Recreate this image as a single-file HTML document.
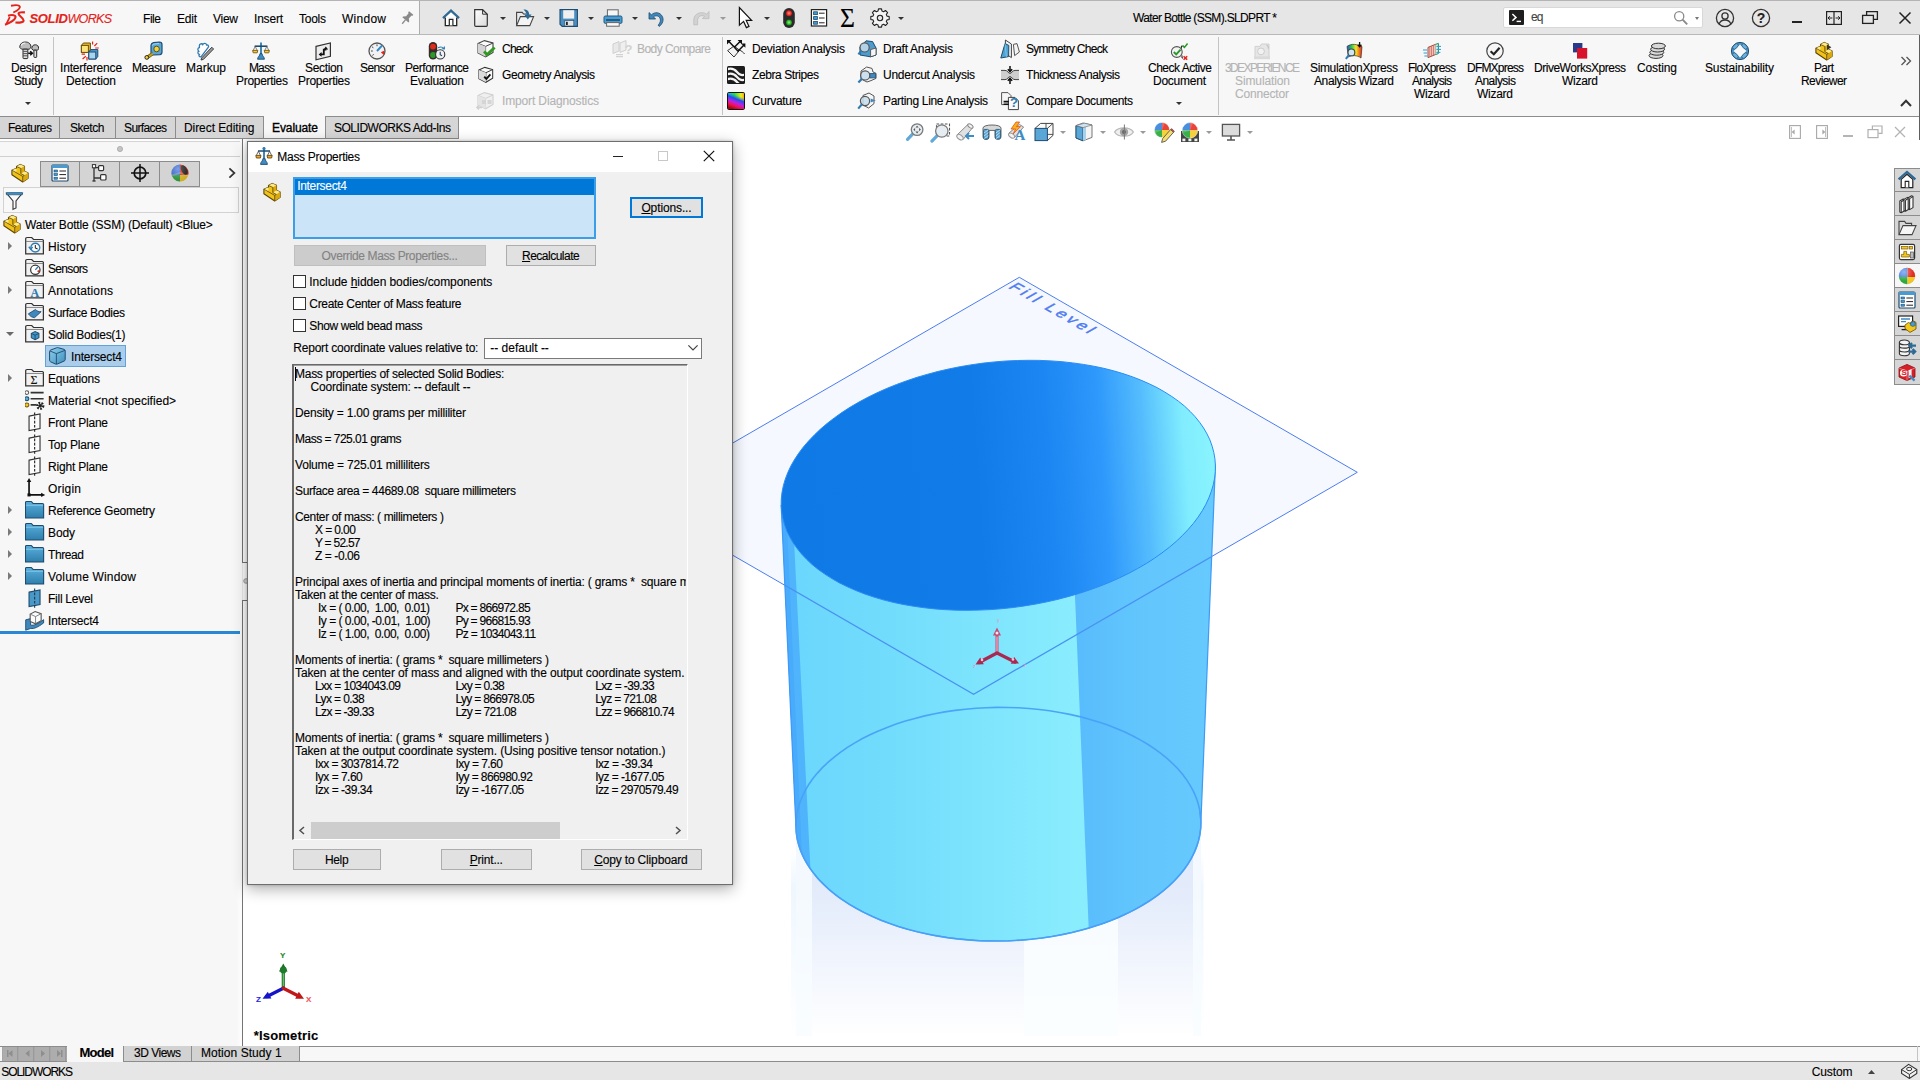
<!DOCTYPE html>
<html lang="en"><head><meta charset="utf-8"><title>SOLIDWORKS - Water Bottle (SSM).SLDPRT</title>
<style>
html,body{margin:0;padding:0;width:1920px;height:1080px;overflow:hidden;background:#fff;}
body{position:relative;font-family:"Liberation Sans",sans-serif;font-size:12px;color:#000;}
.a{position:absolute;box-sizing:border-box;}
.t{position:absolute;white-space:pre;line-height:20px;height:20px;-webkit-text-stroke-width:.12px;}
u{text-decoration:underline;}
</style></head><body>

<!-- 01_frames.py -->
<div class="a" style="left:0px;top:0px;width:1920px;height:35px;background:#e6e6e6;"></div>
<div class="a" style="left:0px;top:0px;width:419px;height:35px;background:#f7f7f7;"></div>
<div class="a" style="left:419px;top:1px;width:1px;height:33px;background:#adadad;"></div>
<div class="a" style="left:0px;top:0px;width:1920px;height:1px;background:#b4b4b4;"></div>
<div class="a" style="left:0px;top:34px;width:1920px;height:1px;background:#b8b8b8;"></div>
<div class="a" style="left:0px;top:35px;width:1920px;height:81px;background:#f7f7f7;"></div>
<div class="a" style="left:0px;top:116px;width:1920px;height:1px;background:#b4b4b4;"></div>
<div class="a" style="left:0px;top:139px;width:242px;height:907px;background:#f7f7f7;background:linear-gradient(90deg,#f7f7f7 0,#f7f7f7 236px,#fdfdfd 242px);"></div>
<div class="a" style="left:242px;top:139px;width:1px;height:907px;background:#747474;"></div>
<div class="a" style="left:242px;top:562px;width:1px;height:38px;background:#ececec;"></div>
<div class="a" style="left:242px;top:562px;width:5px;height:1px;background:#747474;"></div>
<div class="a" style="left:242px;top:600px;width:5px;height:1px;background:#747474;"></div>
<svg class="a" style="left:242px;top:577px;" width="6" height="8" viewBox="0 0 6 8"><circle cx="4" cy="4" r="2.300" fill="#d4d4d4" stroke="#8a8a8a" stroke-width=".8"/></svg>
<div class="a" style="left:0px;top:1062px;width:1920px;height:18px;background:#e6e6e6;border-top:1px solid #9a9a9a;"></div>
<!-- 02_titlebar.py -->
<svg class="a" style="left:0px;top:0px;" width="30" height="30" viewBox="0 0 30 30"><g fill="none" stroke="#e3241b" stroke-linecap="butt" stroke-linejoin="round">
<path d="M11 5.700C15 5 19.200 5 19.800 6.600C20.400 8.200 17 10.700 13.300 12.500" stroke-width="1.900"/>
<path d="M8 15.700C12 14.500 16.200 15 15.500 17.400C14.600 20.400 9.600 23 5 24.700" stroke-width="2"/>
<path d="M9.800 17L6.400 23.800" stroke-width="1.700"/>
<path d="M24.900 12.400C22 12.100 18.700 12 18.500 13.700C18.300 15.700 23.600 18 23.600 20.400C23.600 22.600 19 22.800 15.400 22.500" stroke-width="2.100"/>
</g></svg>
<div class="t" style="left:29.5px;top:8.5px;font-size:13px;color:#e2231a;font-style:italic;letter-spacing:-0.2px;"><b style="letter-spacing:-0.35px;">SOLID</b><span style="letter-spacing:-0.75px;font-size:12.6px;">WORKS</span></div>
<div class="t" style="top:8.65px;left:143.0px;letter-spacing:-0.45px;">File</div>
<div class="t" style="top:8.65px;left:177.0px;letter-spacing:-0.23px;">Edit</div>
<div class="t" style="top:8.65px;left:213.0px;letter-spacing:-0.26px;">View</div>
<div class="t" style="top:8.65px;left:254.0px;letter-spacing:-0.20px;">Insert</div>
<div class="t" style="top:8.65px;left:299.0px;letter-spacing:-0.25px;">Tools</div>
<div class="t" style="top:8.65px;left:342.0px;letter-spacing:0.26px;">Window</div>
<svg class="a" style="left:399px;top:10px;" width="16" height="16" viewBox="0 0 16 16"><g transform="rotate(40 8 8)"><path d="M5.2 1.5h5.6v1.6h-1v4.2l2.2 2v1.2H4v-1.2l2.2-2V3.1h-1z" fill="#8a8a8a"/><path d="M8 10.5v5" stroke="#8a8a8a" stroke-width="1.3"/></g></svg>
<svg class="a" style="left:441px;top:8px;" width="20" height="20" viewBox="0 0 20 20"><path d="M2 10.2 L10 2.6 L18 10.2" fill="none" stroke="#2e6a96" stroke-width="2.4" stroke-linejoin="miter"/><path d="M4.3 9.6V17.6H15.7V9.6" fill="#fff" stroke="#222" stroke-width="1.3"/><path d="M4.4 9.6 L10 4.4 L15.6 9.6z" fill="#fff"/><path d="M8.3 17.4V11.4H11.9V17.4" fill="#fff" stroke="#222" stroke-width="1.2"/></svg>
<svg class="a" style="left:472px;top:8px;" width="18" height="20" viewBox="0 0 18 20"><defs><linearGradient id="gd1" x1="0" y1="0" x2="1" y2="1"><stop offset="0" stop-color="#fff"/><stop offset="1" stop-color="#d9d9d9"/></linearGradient></defs><path d="M2.7 1.7H10.6L15.3 6.2V17.2Q15.3 18.3 14.2 18.3H3.8Q2.7 18.3 2.7 17.2z" fill="url(#gd1)" stroke="#333" stroke-width="1.2"/><path d="M10.6 1.7V6.2H15.3" fill="none" stroke="#333" stroke-width="1"/></svg>
<div class="a" style="left:499.5px;top:16.5px;width:0;height:0;border-left:3.0px solid transparent;border-right:3.0px solid transparent;border-top:3px solid #333;"></div>
<svg class="a" style="left:514px;top:8px;" width="22" height="20" viewBox="0 0 22 20"><path d="M2.6 17.6V4.4H8.2L9.6 6H12" fill="#e9e9e9" stroke="#444" stroke-width="1.1"/><path d="M2.6 17.6L6.4 8.6H19.6L15.8 17.6z" fill="#f4f4f4" stroke="#444" stroke-width="1.1"/><path d="M9.4 1.6C13 1.4 15.2 3.4 15.2 6.6H17.6L13.8 11.4L10.2 6.6H12.4C12.2 4.6 11.2 3.2 9.4 1.6z" fill="#2e6a96"/></svg>
<div class="a" style="left:543.5px;top:16.5px;width:0;height:0;border-left:3.0px solid transparent;border-right:3.0px solid transparent;border-top:3px solid #333;"></div>
<svg class="a" style="left:558px;top:8px;" width="22" height="20" viewBox="0 0 22 20"><path d="M2 1.6H19.4V18.4H4.2L2 16.2z" fill="#4b8fc0" stroke="#1d4c70" stroke-width="1.1"/><rect x="5.2" y="2.2" width="11" height="8.4" fill="#f0f0f0"/><rect x="6.8" y="12.6" width="9" height="5.4" fill="#e4e4e4" stroke="#1d4c70" stroke-width=".6"/><rect x="8" y="13.8" width="1.8" height="3.2" fill="#222"/></svg>
<div class="a" style="left:587.5px;top:16.5px;width:0;height:0;border-left:3.0px solid transparent;border-right:3.0px solid transparent;border-top:3px solid #333;"></div>
<svg class="a" style="left:602px;top:8px;" width="22" height="20" viewBox="0 0 22 20"><rect x="5.4" y="1.8" width="10.8" height="7" fill="#f6f6f6" stroke="#666" stroke-width="1"/><rect x="2" y="8" width="18" height="7.4" rx="1.4" fill="#4b9bd0" stroke="#1d5c86" stroke-width="1"/><rect x="4" y="11.2" width="14" height="1.6" fill="#1d4c70"/><rect x="4.6" y="14.6" width="12.6" height="3.6" fill="#fafafa" stroke="#666" stroke-width="1"/></svg>
<div class="a" style="left:631.5px;top:16.5px;width:0;height:0;border-left:3.0px solid transparent;border-right:3.0px solid transparent;border-top:3px solid #333;"></div>
<svg class="a" style="left:646px;top:8px;" width="22" height="20" viewBox="0 0 22 20"><path d="M3 4.6V11H9.6L7.4 8.8C10.8 6.4 14.6 8.6 14.4 12.4C14.3 14.4 13.4 15.8 12 17.2L13.4 18.4C16.6 15.8 18.2 11.8 16.2 8.2C13.8 4 8.8 3.6 5.4 6.8z" fill="#3f88bd" stroke="#1d4c70" stroke-width=".8"/></svg>
<div class="a" style="left:675.5px;top:16.5px;width:0;height:0;border-left:3.0px solid transparent;border-right:3.0px solid transparent;border-top:3px solid #333;"></div>
<svg class="a" style="left:690px;top:8px;" width="22" height="20" viewBox="0 0 22 20"><path d="M19 3.6V10.6H12.4L14.6 8.4C11.2 6.4 7.6 8.6 7.6 12.4V16.8H3.8V12C3.8 5.6 11 2.6 16.6 6.2z" fill="#d2d2d2" stroke="#bcbcbc" stroke-width=".8"/></svg>
<div class="a" style="left:719.5px;top:16.5px;width:0;height:0;border-left:3.0px solid transparent;border-right:3.0px solid transparent;border-top:3px solid #9a9a9a;"></div>
<svg class="a" style="left:736px;top:6px;" width="20" height="24" viewBox="0 0 20 24"><path d="M3.4 1.6V19.2L7.6 15.4L10.4 21.6L13 20.4L10.2 14.4H15.6z" fill="#fff" stroke="#111" stroke-width="1.2" stroke-linejoin="miter"/></svg>
<div class="a" style="left:763.5px;top:16.5px;width:0;height:0;border-left:3.0px solid transparent;border-right:3.0px solid transparent;border-top:3px solid #333;"></div>
<svg class="a" style="left:781px;top:7px;" width="16" height="22" viewBox="0 0 16 22"><defs><radialGradient id="gr1"><stop offset="0" stop-color="#ff8a7a"/><stop offset="1" stop-color="#d01010"/></radialGradient><radialGradient id="gg1"><stop offset="0" stop-color="#8aff7a"/><stop offset="1" stop-color="#0a8a10"/></radialGradient></defs><rect x="2.2" y="1" width="11.6" height="20" rx="5.8" fill="#2a2a2a"/><circle cx="8" cy="6.2" r="3" fill="url(#gr1)"/><circle cx="8" cy="15.4" r="3" fill="url(#gg1)"/></svg>
<svg class="a" style="left:809px;top:8px;" width="20" height="20" viewBox="0 0 20 20"><rect x="2.4" y="1.6" width="15.2" height="16.4" fill="#fff" stroke="#222" stroke-width="1.2"/><g fill="#3f9bd4" stroke="#1d4c70" stroke-width=".8"><rect x="4.6" y="3.8" width="3.8" height="2.8"/><rect x="4.6" y="8.6" width="3.8" height="2.8"/><rect x="4.6" y="13.4" width="3.8" height="2.8"/></g><path d="M10 5.2H15.6M10 10H15.6M10 14.8H15.6" stroke="#222" stroke-width="1"/></svg>
<div class="t" style="left:840px;top:3.5px;font-family:'Liberation Serif',serif;font-size:27px;line-height:28px;height:28px;transform:scaleX(.95);transform-origin:left;">&Sigma;</div>
<svg class="a" style="left:869px;top:7px;" width="22" height="22" viewBox="0 0 22 22"><g transform="translate(11 11)"><path fill="#f4f4f4" stroke="#222" stroke-width="1.1" stroke-linejoin="round" d="M-1.5 -8.4H1.5L2 -6.2L3.6 -5.5L5.5 -6.8L7.6 -4.7L6.3 -2.8L7 -1.2L9.2 -.8V2.2L7 2.6L6.3 4.2L7.6 6.1L5.5 8.2L3.6 6.9L2 7.6L1.5 9.8H-1.5L-2 7.6L-3.6 6.9L-5.5 8.2L-7.6 6.1L-6.300 4.2L-7 2.6L-9.2 2.2V-.8L-7 -1.2L-6.3 -2.8L-7.6 -4.7L-5.5 -6.8L-3.6 -5.5L-2 -6.2z" transform="translate(0 -.7)"/><circle r="2.7" fill="#e6e6e6" stroke="#222" stroke-width="1.1"/></g></svg>
<div class="a" style="left:897.5px;top:16.5px;width:0;height:0;border-left:3.0px solid transparent;border-right:3.0px solid transparent;border-top:3px solid #333;"></div>
<div class="t" style="top:7.65px;left:1133.0px;letter-spacing:-0.66px;">Water Bottle (SSM).SLDPRT *</div>
<div class="a" style="left:1503px;top:7px;width:200px;height:21px;background:#fff;border-radius:2px;border:1px solid #d8d8d8;"></div>
<svg class="a" style="left:1509px;top:10px;" width="15" height="15" viewBox="0 0 15 15"><rect width="15" height="15" rx="1" fill="#1e1e1e"/><path d="M3.4 4L7 7.4L3.4 10.8" fill="none" stroke="#fff" stroke-width="1.5"/><path d="M7.6 11.4H12" stroke="#fff" stroke-width="1.4"/></svg>
<div class="t" style="top:7.15px;left:1531.0px;color:#444;letter-spacing:-0.85px;">eq</div>
<svg class="a" style="left:1672px;top:9px;" width="18" height="18" viewBox="0 0 18 18"><circle cx="7.2" cy="7.2" r="4.6" fill="none" stroke="#8a8a8a" stroke-width="1.3"/><path d="M10.6 10.6L15.2 15.4" stroke="#8a8a8a" stroke-width="1.9"/></svg>
<div class="a" style="left:1694.5px;top:16.5px;width:0;height:0;border-left:2.5px solid transparent;border-right:2.5px solid transparent;border-top:3px solid #777;"></div>
<svg class="a" style="left:1715px;top:8px;" width="20" height="20" viewBox="0 0 20 20"><circle cx="10" cy="10" r="8.6" fill="none" stroke="#333" stroke-width="1.3"/><circle cx="10" cy="8" r="3.1" fill="none" stroke="#333" stroke-width="1.3"/><path d="M4.2 16.2C5 12.8 7.4 12 10 12S15 12.800 15.800 16.200" fill="none" stroke="#333" stroke-width="1.3"/></svg>
<svg class="a" style="left:1751px;top:8px;" width="20" height="20" viewBox="0 0 20 20"><circle cx="10" cy="10" r="8.6" fill="none" stroke="#333" stroke-width="1.3"/></svg>
<div class="t" style="top:8.15px;left:1756.7px;font-size:14px;color:#222;font-weight:bold;letter-spacing:-0.35px;">?</div>
<div class="a" style="left:1792px;top:21px;width:10px;height:2px;background:#222;"></div>
<svg class="a" style="left:1825px;top:10px;" width="18" height="16" viewBox="0 0 18 16"><rect x="1.600" y="1.600" width="14.800" height="12.800" fill="none" stroke="#222" stroke-width="1.2"/><path d="M9 1.6V14.400" stroke="#222" stroke-width="1.2"/><path d="M3 8H7.400M4.800 6.200L3 8L4.800 9.800M15 8H10.600M13.200 6.200L15 8L13.200 9.800" fill="none" stroke="#222" stroke-width="1"/></svg>
<svg class="a" style="left:1861px;top:10px;" width="18" height="16" viewBox="0 0 18 16"><path d="M5.6 5V1.600H16.400V9.400H12.600" fill="none" stroke="#222" stroke-width="1.3"/><rect x="1.600" y="5.400" width="10.800" height="8" fill="none" stroke="#222" stroke-width="1.3"/></svg>
<svg class="a" style="left:1898px;top:11px;" width="14" height="14" viewBox="0 0 14 14"><path d="M1.500 1.500L12.500 12.500M12.500 1.500L1.500 12.500" stroke="#222" stroke-width="1.5"/></svg>
<!-- 03_ribbon.py -->
<div class="a" style="left:53px;top:37px;width:1px;height:78px;background:#c4c4c4;"></div>
<div class="a" style="left:722px;top:37px;width:1px;height:78px;background:#c4c4c4;"></div>
<div class="a" style="left:1218px;top:37px;width:1px;height:78px;background:#c4c4c4;"></div>
<div class="t" style="top:58.15px;left:11.0px;letter-spacing:-0.27px;">Design</div>
<div class="t" style="top:71.15px;left:14.0px;letter-spacing:-0.42px;">Study</div>
<div class="t" style="top:58.15px;left:60.0px;letter-spacing:-0.18px;">Interference</div>
<div class="t" style="top:71.15px;left:66.0px;letter-spacing:-0.09px;">Detection</div>
<div class="t" style="top:58.15px;left:132.0px;letter-spacing:-0.45px;">Measure</div>
<div class="t" style="top:58.15px;left:186.0px;letter-spacing:-0.00px;">Markup</div>
<div class="t" style="top:58.15px;left:249.0px;letter-spacing:-0.89px;">Mass</div>
<div class="t" style="top:71.15px;left:236.0px;letter-spacing:-0.30px;">Properties</div>
<div class="t" style="top:58.15px;left:305.0px;letter-spacing:-0.34px;">Section</div>
<div class="t" style="top:71.15px;left:298.0px;letter-spacing:-0.30px;">Properties</div>
<div class="t" style="top:58.15px;left:360.0px;letter-spacing:-0.60px;">Sensor</div>
<div class="t" style="top:58.15px;left:405.0px;letter-spacing:-0.47px;">Performance</div>
<div class="t" style="top:71.15px;left:410.0px;letter-spacing:-0.23px;">Evaluation</div>
<div class="t" style="top:58.15px;left:1148.0px;letter-spacing:-0.49px;">Check Active</div>
<div class="t" style="top:71.15px;left:1153.0px;letter-spacing:-0.24px;">Document</div>
<div class="t" style="top:58.15px;left:1225.0px;color:#b4b4b4;letter-spacing:-1.61px;">3DEXPERIENCE</div>
<div class="t" style="top:71.15px;left:1235.0px;color:#b4b4b4;letter-spacing:-0.11px;">Simulation</div>
<div class="t" style="top:84.15px;left:1235.0px;color:#b4b4b4;letter-spacing:-0.17px;">Connector</div>
<div class="t" style="top:58.15px;left:1310.0px;letter-spacing:-0.36px;">SimulationXpress</div>
<div class="t" style="top:71.15px;left:1314.0px;letter-spacing:-0.38px;">Analysis Wizard</div>
<div class="t" style="top:58.15px;left:1408.0px;letter-spacing:-0.75px;">FloXpress</div>
<div class="t" style="top:71.15px;left:1412.0px;letter-spacing:-0.67px;">Analysis</div>
<div class="t" style="top:84.15px;left:1414.0px;letter-spacing:-0.27px;">Wizard</div>
<div class="t" style="top:58.15px;left:1467.0px;letter-spacing:-0.79px;">DFMXpress</div>
<div class="t" style="top:71.15px;left:1475.0px;letter-spacing:-0.53px;">Analysis</div>
<div class="t" style="top:84.15px;left:1477.0px;letter-spacing:-0.27px;">Wizard</div>
<div class="t" style="top:58.15px;left:1534.0px;letter-spacing:-0.48px;">DriveWorksXpress</div>
<div class="t" style="top:71.15px;left:1562.0px;letter-spacing:-0.27px;">Wizard</div>
<div class="t" style="top:58.15px;left:1637.0px;letter-spacing:-0.11px;">Costing</div>
<div class="t" style="top:58.15px;left:1705.0px;letter-spacing:-0.13px;">Sustainability</div>
<div class="t" style="top:58.15px;left:1814.0px;letter-spacing:-0.67px;">Part</div>
<div class="t" style="top:71.15px;left:1801.0px;letter-spacing:-0.57px;">Reviewer</div>
<div class="a" style="left:25.0px;top:102.0px;width:0;height:0;border-left:3.0px solid transparent;border-right:3.0px solid transparent;border-top:3px solid #333;"></div>
<div class="a" style="left:1176.0px;top:102.0px;width:0;height:0;border-left:3.0px solid transparent;border-right:3.0px solid transparent;border-top:3px solid #333;"></div>
<div class="t" style="top:39.15px;left:502.0px;letter-spacing:-0.75px;">Check</div>
<div class="t" style="top:65.15px;left:502.0px;letter-spacing:-0.44px;">Geometry Analysis</div>
<div class="t" style="top:91.15px;left:502.0px;color:#b4b4b4;letter-spacing:-0.14px;">Import Diagnostics</div>
<div class="t" style="top:39.15px;left:637.0px;color:#b4b4b4;letter-spacing:-0.55px;">Body Compare</div>
<div class="t" style="top:39.15px;left:752.0px;letter-spacing:-0.26px;">Deviation Analysis</div>
<div class="t" style="top:65.15px;left:752.0px;letter-spacing:-0.42px;">Zebra Stripes</div>
<div class="t" style="top:91.15px;left:752.0px;letter-spacing:-0.34px;">Curvature</div>
<div class="t" style="top:39.15px;left:883.0px;letter-spacing:-0.26px;">Draft Analysis</div>
<div class="t" style="top:65.15px;left:883.0px;letter-spacing:-0.25px;">Undercut Analysis</div>
<div class="t" style="top:91.15px;left:883.0px;letter-spacing:-0.32px;">Parting Line Analysis</div>
<div class="t" style="top:39.15px;left:1026.0px;letter-spacing:-0.72px;">Symmetry Check</div>
<div class="t" style="top:65.15px;left:1026.0px;letter-spacing:-0.43px;">Thickness Analysis</div>
<div class="t" style="top:91.15px;left:1026.0px;letter-spacing:-0.40px;">Compare Documents</div>
<svg class="a" style="left:1900px;top:56px;" width="12" height="10" viewBox="0 0 12 10"><path d="M1.5 1L5.5 5L1.5 9M6.5 1L10.5 5L6.5 9" fill="none" stroke="#555" stroke-width="1.3"/></svg>
<svg class="a" style="left:1900px;top:98px;" width="12" height="10" viewBox="0 0 12 10"><path d="M1 8L6 2.800L11 8" fill="none" stroke="#333" stroke-width="2"/></svg>
<svg class="a" style="left:19.0px;top:41.0px;" width="20" height="20" viewBox="0 0 20 20"><g stroke="#2a2a2a" stroke-width="1"><path d="M.8 6.400C.8 2.600 3.400 1 6.400 1S12 2.600 12 6.400L10.200 8.200H2.600z" fill="#bdbdbd"/><path d="M2 4.600C3 2.600 5 2 6.400 2" fill="none" stroke="#f2f2f2" stroke-width="1.200"/><rect x="4" y="8.200" width="4.800" height="9.400" rx=".8" fill="#dedede"/><path d="M4 10.400H8.800M4 12.600H8.800M4 14.800H8.800" stroke="#555"/>
<path d="M12.800 7.800C12.800 5 14.200 3.800 16.300 3.800S19.700 5 19.700 7.800L18.500 9.200H14z" fill="#bdbdbd"/><rect x="14.900" y="9.200" width="2.800" height="7.200" rx=".6" fill="#dedede"/></g><path d="M9.200 12.200H13M11.200 10.200L13.400 12.200L11.200 14.200" fill="none" stroke="#111" stroke-width="1.500"/></svg>
<svg class="a" style="left:80.0px;top:41.0px;" width="20" height="20" viewBox="0 0 20 20"><path d="M1.400 4.400L3.400 2H10.400V9L8.400 11.400H1.400z" fill="#e9b81a" stroke="#6a5208" stroke-width="1"/><rect x="1.400" y="4.400" width="7" height="7" fill="#fbe27a" stroke="#6a5208" stroke-width="1"/><path d="M8.800 11L10.800 8.600H17.800V15.600L15.800 18H8.800z" fill="#4f9bd0" stroke="#1d4c70" stroke-width="1"/><rect x="8.800" y="11" width="7" height="7" fill="#a8d4f0" stroke="#1d4c70" stroke-width="1"/><g stroke="#e8221a" stroke-width="1.200"><path d="M12.600 .6V3.600M14.400 5L17.200 2.200M15.200 7H18.800M1.600 13.200H5M2.600 18L5.800 15.200M7 19.400V16"/></g></svg>
<svg class="a" style="left:144.0px;top:41.0px;" width="20" height="20" viewBox="0 0 20 20"><path d="M7 4.200Q7.400 2 9.600 1.600L15.400 1Q18 1 18 3.400V11Q18 13.400 15.800 13.600L9.600 14Q7 14 7 11.400z" fill="#5aa6d6" stroke="#1d4c70" stroke-width="1.200"/><path d="M8.400 4.600Q8.600 3.200 10 3L15 2.600" fill="none" stroke="#a8d4f0" stroke-width="1"/><circle cx="12.600" cy="8" r="2.800" fill="#f6d23a" stroke="#4a4a10" stroke-width=".9"/><path d="M8.600 12.600L3.400 16.200" stroke="#caa21a" stroke-width="3.200"/><path d="M8.600 11.200L3 15M9 14L4 17.600" stroke="#4a4a10" stroke-width=".7"/><circle cx="2.800" cy="16.400" r="1.900" fill="#f6d23a" stroke="#222" stroke-width="1"/></svg>
<svg class="a" style="left:195.0px;top:41.0px;" width="20" height="20" viewBox="0 0 20 20"><path d="M4.400 4.600C4.400 2.600 7 2.200 7.800 3.600C8.600 1.800 11.400 2 11.600 4C13.400 3.600 14.200 5.600 13 6.600L6 15.800C4.200 16 3.400 14.600 4.400 13.400C2.600 13 2.400 10.800 3.800 10.200C2.200 8.800 2.800 6.600 4.400 6.600z" fill="#fff" stroke="#2e7ab2" stroke-width="1.300"/><path d="M6.600 17L16.800 6.200L18.600 8L8.400 18.400L6 19z" fill="#9a9a9a" stroke="#333" stroke-width=".9"/></svg>
<svg class="a" style="left:251.0px;top:41.0px;" width="20" height="20" viewBox="0 0 20 20"><path d="M10 1.400V13" stroke="#2e7ab2" stroke-width="1.800"/><path d="M3.600 5.200H16.400" stroke="#1d4c70" stroke-width="1.600"/><path d="M6.600 18.200C6.600 15.600 9 15 9 12.600H11C11 15 13.400 15.600 13.400 18.200z" fill="#3f8cc4" stroke="#1d4c70" stroke-width=".9"/><path d="M1.600 9.400H6.800L6.200 11.800H2.200z" fill="#f6c83a" stroke="#7a5a08" stroke-width=".9"/><path d="M13.200 9.400H18.400L17.800 11.800H13.800z" fill="#f6c83a" stroke="#7a5a08" stroke-width=".9"/><path d="M4.200 5.400L2.200 9.400M4.200 5.400L6.200 9.400M15.800 5.400L13.800 9.400M15.800 5.400L17.800 9.400" stroke="#555" stroke-width=".7"/></svg>
<svg class="a" style="left:313.0px;top:41.0px;" width="20" height="20" viewBox="0 0 20 20"><path d="M3 5.400L17.400 2V15.400L3 18.800z" fill="#ececec" stroke="#333" stroke-width="1.200"/><path d="M7.400 13.400H10.800V8.600H13.400" fill="none" stroke="#111" stroke-width="1.800"/><path d="M12.800 5.600L15.200 8.600H10.600zM8.600 11L5.600 13.400L8.600 15.800z" fill="#111"/></svg>
<svg class="a" style="left:367.0px;top:41.0px;" width="20" height="20" viewBox="0 0 20 20"><circle cx="10" cy="10" r="8" fill="#f2f2f2" stroke="#555" stroke-width="1.300"/><path d="M10 10L15.200 4.400" stroke="#2e8ac8" stroke-width="2"/><path d="M13.800 11.200L17.600 9.400L16.800 14z" fill="#e8221a"/><g stroke="#333" stroke-width=".9"><path d="M4 10H5.800M5 5.800L6.400 6.800M10 3.400V5.200M5.400 14.400L6.800 13.400"/></g></svg>
<svg class="a" style="left:427.0px;top:41.0px;" width="20" height="20" viewBox="0 0 20 20"><rect x="1.800" y="1" width="8.400" height="17.600" rx="4.200" fill="#3a2a2a"/><circle cx="6" cy="5.600" r="2.900" fill="#e02a1a"/><circle cx="6" cy="14" r="2.900" fill="#2a9a2a"/><circle cx="13.200" cy="13.400" r="4.600" fill="#f2f2f2" stroke="#333" stroke-width="1.100"/><path d="M13.200 10.800V13.600L15 14.800" fill="none" stroke="#1d4c70" stroke-width="1.100"/><path d="M11 6.800C13.200 5.600 15.600 6 17.200 7.600M17.400 5.400L17.400 8L14.800 7.800" fill="none" stroke="#2e7ab2" stroke-width="1.100"/></svg>
<svg class="a" style="left:1169.0px;top:41.0px;" width="20" height="20" viewBox="0 0 20 20"><circle cx="7.800" cy="11" r="5.400" fill="#f4f4f4" stroke="#555" stroke-width="1.100"/><path d="M4.800 11L7.200 13.400L11.600 8.600" fill="none" stroke="#2a9a2a" stroke-width="2"/><path d="M13.600 4.600L15.400 6.400L18.600 2.600" fill="none" stroke="#2a9a2a" stroke-width="1.600"/><path d="M14.600 15.200L18.200 18.800M18.200 15.200L14.600 18.800" stroke="#e8221a" stroke-width="1.500"/><path d="M12.400 7.600V5H13.600M13 14.400V17H14" fill="none" stroke="#222" stroke-width="1"/></svg>
<svg class="a" style="left:1252.0px;top:41.0px;" width="20" height="20" viewBox="0 0 20 20"><path d="M3 5.400H8L9.400 3H17V17H3z" fill="#e6e6e6" stroke="#d0d0d0" stroke-width="1"/><circle cx="9" cy="10.400" r="3.400" fill="#f2f2f2" stroke="#cccccc"/><path d="M14.400 4C16 4.600 16.600 6 16.400 7.600" fill="none" stroke="#c4c4c4" stroke-width="1.200"/><rect x="2" y="15.400" width="16" height="2.800" fill="#dadada"/></svg>
<svg class="a" style="left:1344.0px;top:41.0px;" width="20" height="20" viewBox="0 0 20 20"><defs><linearGradient id="gsx" x1="0" y1="0" x2="1" y2="0"><stop offset="0" stop-color="#2a4ad8"/><stop offset=".3" stop-color="#2ac84a"/><stop offset=".6" stop-color="#f6e22a"/><stop offset="1" stop-color="#e8221a"/></linearGradient></defs><path d="M3 5.400C8 2 13 3.400 18 5.600L17 17C13 14 8 14 4.400 16z" fill="url(#gsx)" stroke="#333" stroke-width=".7"/><path d="M15.600 1V5.400M13.800 3.800L15.600 5.800L17.400 3.800" fill="none" stroke="#111" stroke-width="1.300"/><circle cx="7.400" cy="11.400" r="3.400" fill="#cfe6f6" stroke="#444" stroke-width="1.100"/><path d="M5 14L1.800 17.800" stroke="#2e7ab2" stroke-width="2"/></svg>
<svg class="a" style="left:1422.0px;top:41.0px;" width="20" height="20" viewBox="0 0 20 20"><path d="M6 6.400L13.400 3.400V13.600L6 16.600z" fill="#f2d6d0" stroke="#a04a3a" stroke-width="1"/><path d="M13.400 3.400L16.400 2.400V12.600L13.400 13.600" fill="#d8efe0" stroke="#2a8a5a" stroke-width="1"/><g stroke="#2a9ad8" stroke-width="1"><path d="M1 9H5M1.600 12H5M2.400 15H5.400M14.400 5.400H19M14.400 8.400H19M14.400 11.400H18.400"/></g><g stroke="#c84a3a" stroke-width=".7"><path d="M7.800 6V15.600M9.600 5.200V14.800M11.400 4.400V14.200"/></g></svg>
<svg class="a" style="left:1485.0px;top:41.0px;" width="20" height="20" viewBox="0 0 20 20"><circle cx="10" cy="10" r="8.200" fill="#f6f6f6" stroke="#444" stroke-width="1.200"/><path d="M5.600 10.200L8.800 13.200L14.600 6.800" fill="none" stroke="#222" stroke-width="2.200"/></svg>
<svg class="a" style="left:1570.0px;top:41.0px;" width="20" height="20" viewBox="0 0 20 20"><rect x="3" y="2" width="9.400" height="9.400" fill="#2a3a8a"/><rect x="7" y="7" width="10.200" height="10.600" fill="#d8122a"/></svg>
<svg class="a" style="left:1647.0px;top:41.0px;" width="20" height="20" viewBox="0 0 20 20"><g fill="#d8d8d8" stroke="#333" stroke-width="1"><ellipse cx="9" cy="14.600" rx="7" ry="2.800"/><ellipse cx="9.800" cy="11.400" rx="7" ry="2.800"/><ellipse cx="10.600" cy="8.200" rx="7" ry="2.800"/><ellipse cx="11.400" cy="5" rx="7" ry="2.800"/></g></svg>
<svg class="a" style="left:1730.0px;top:41.0px;" width="20" height="20" viewBox="0 0 20 20"><circle cx="10" cy="10" r="8.600" fill="#4a94c4" stroke="#1d4c70" stroke-width="1"/><path d="M10 3.600L16.400 10L10 16.400L3.600 10z" fill="#f7f7f7"/><g fill="#6ab0de" stroke="#1d4c70" stroke-width=".6"><ellipse cx="5.400" cy="5.400" rx="3.400" ry="1.900" transform="rotate(-45 5.400 5.400)"/><ellipse cx="14.600" cy="5.400" rx="3.400" ry="1.900" transform="rotate(45 14.600 5.400)"/><ellipse cx="14.600" cy="14.600" rx="3.400" ry="1.900" transform="rotate(-45 14.600 14.600)"/><ellipse cx="5.400" cy="14.600" rx="3.400" ry="1.900" transform="rotate(45 5.400 14.600)"/></g></svg>
<svg class="a" style="left:1814.0px;top:41.0px;" width="20" height="20" viewBox="0 0 20 20"><path d="M6.500 3.500L10.200 1.400L14.500 3.200V8.200L18.100 10V15.400L12.700 19L1.900 11.800V7.200L6.500 5.200z" fill="#f0c21a" stroke="#5a4608" stroke-width="1.100" stroke-linejoin="round"/><path d="M6.500 3.500L10.200 1.400L14.500 3.200L10.800 5.400z" fill="#fde98a"/><path d="M10.800 10.600L14.500 8.300L18.100 10L14.300 12.400z" fill="#fde98a"/><path d="M1.900 7.200L6.500 5.200V8.400L4.400 9.400z" fill="#fde98a"/><path d="M14.300 12.400L18.100 10V15.400L12.700 19V13.400z" fill="#d9a90f"/><path d="M10.800 5.400L14.500 3.200V8.300L10.800 10.600z" fill="#d9a90f"/><path d="M6.500 3.500L10.800 5.400V10.600L14.300 12.400L12.700 13.400V19M1.900 7.200L12.700 13.400" fill="none" stroke="#5a4608" stroke-width=".8"/><path d="M13 3.400L17.400 6.200L13 9z" fill="#333"/></svg>
<!-- 04_ribbon_small.py -->
<svg class="a" style="left:475.5px;top:39.0px;" width="20" height="20" viewBox="0 0 20 20"><path d="M2 4.400L8.400 1.600L17 4L17 13.400L9.600 17.800L2 13.800z" fill="#fafafa" stroke="#444" stroke-width="1.100"/><path d="M2 4.400L9.600 7.400L17 4M9.600 7.400V17.800" fill="none" stroke="#444" stroke-width="1"/><path d="M2 4.400L9.600 7.400V17.800L2 13.800z" fill="#d4d4d4"/><path d="M8 12.400L11.200 15.600L18.600 8.400" fill="none" stroke="#2f9a1f" stroke-width="2.800"/></svg>
<svg class="a" style="left:476.0px;top:65.0px;" width="20" height="20" viewBox="0 0 20 20"><g transform="translate(.5 0) scale(.92) translate(.6 1)"><path d="M2 4.400L8.400 1.600L17 4L17 13.400L9.600 17.800L2 13.800z" fill="#fafafa" stroke="#333" stroke-width="1.100"/><path d="M2 4.400L9.600 7.400L17 4M9.600 7.400V17.800" fill="none" stroke="#333" stroke-width="1"/><path d="M2 4.400L9.600 7.400V17.800L2 13.800z" fill="#dcdcdc"/></g><path d="M8.200 11.800L10.400 13.800L14.400 9.400" fill="none" stroke="#111" stroke-width="1.900"/></svg>
<svg class="a" style="left:476.0px;top:91.0px;" width="20" height="20" viewBox="0 0 20 20"><g opacity=".9"><path d="M2 4.400L8.400 1.600L17 4L17 13.400L9.600 17.800L2 13.800z" fill="#efefef" stroke="#cdcdcd" stroke-width="1.100"/><path d="M2 4.400L9.600 7.400L17 4M9.600 7.400V17.800" fill="none" stroke="#cdcdcd" stroke-width="1"/><path d="M2 4.400L9.600 7.400V17.800L2 13.800z" fill="#e2e2e2"/><rect x="6" y="9" width="4" height="4" fill="#d2d2d2"/><rect x="11.600" y="9" width="4" height="4" fill="#d2d2d2"/><path d="M1 16.400H6M3 14.400L1 16.400L3 18.400" stroke="#cdcdcd" stroke-width="1.500" fill="none"/></g></svg>
<svg class="a" style="left:611.0px;top:39.0px;" width="20" height="20" viewBox="0 0 20 20"><path d="M2 5L8 2.600V12L2 14.400z" fill="#e9e9e9" stroke="#cfcfcf"/><path d="M9 4L15 1.600V11L9 13.400z" fill="#efefef" stroke="#cfcfcf"/><path d="M5 15.600H12M5 17.600H12" stroke="#d2d2d2" stroke-width="1.400"/></svg>
<div class="t" style="top:40.15px;left:624.5px;font-size:13px;color:#d4d4d4;font-weight:bold;letter-spacing:0.00px;">?</div>
<svg class="a" style="left:726.0px;top:39.0px;" width="20" height="20" viewBox="0 0 20 20"><path d="M1.600 11.600L8 7L13.600 11.200L8 18z" fill="#f2f2f2" stroke="#333" stroke-width="1"/><path d="M13.600 11.200C15.400 11.800 17.200 13.200 18.600 15" fill="none" stroke="#333" stroke-width="1"/><g stroke="#111" stroke-width="1.600" fill="none"><path d="M2.400 2L8.400 8.200L14.600 2M8.400 8.200L12 12.200L18 6"/></g><g fill="#111"><path d="M1 1H5.400L1 5.400z"/><path d="M16 1H11.600L16 5.400z" transform="translate(0 0)"/><path d="M19.400 4.400H15L19.400 8.800z"/></g></svg>
<svg class="a" style="left:727px;top:66px" width="18" height="18" viewBox="0 0 18 18"><defs><clipPath id="zc"><rect x="1" y="1" width="16" height="16"/></clipPath></defs><rect width="18" height="18" rx="1.500" fill="#1c1c1c"/><g clip-path="url(#zc)" fill="none" stroke="#f4f4f4" stroke-width="2.300"><path d="M-1 3.800C4 1.500 7 2.500 10 6S15 9.500 19 8.500"/><path d="M-1 8.800C4 6.500 7 7.500 10 11S15 14.500 19 13.500"/><path d="M-1 13.800C4 11.500 7 12.500 10 16S15 19.500 19 18.500"/></g></svg>
<svg class="a" style="left:727px;top:92px" width="18" height="18" viewBox="0 0 18 18"><defs><linearGradient id="cg1" x1="0" y1="0" x2="1" y2="0"><stop offset="0" stop-color="#10d0e0"/><stop offset=".4" stop-color="#20e040"/><stop offset=".8" stop-color="#f0f010"/><stop offset="1" stop-color="#f0a010"/></linearGradient><linearGradient id="cg2" x1="0.700" y1="0" x2="0.300" y2="1"><stop offset="0" stop-color="#2060f0" stop-opacity="0"/><stop offset=".16" stop-color="#2090f0" stop-opacity="0"/><stop offset=".38" stop-color="#2050f0"/><stop offset=".6" stop-color="#c020e0"/><stop offset=".8" stop-color="#f01050"/><stop offset="1" stop-color="#a00808"/></linearGradient></defs><rect x=".5" y=".5" width="17" height="17" rx="1.200" fill="url(#cg1)" stroke="#111" stroke-width="1"/><rect x="1" y="1" width="16" height="16" fill="url(#cg2)"/></svg>
<svg class="a" style="left:856.5px;top:39.0px;" width="20" height="20" viewBox="0 0 20 20"><path d="M3 8L9 1.800L15.600 2.600L19 9V16L13.600 17.800L3 16z" fill="#4f9ccc" stroke="#1d4c70" stroke-width="1"/><path d="M13.600 10.600L19 9V16L13.600 17.800z" fill="#f6f6f6" stroke="#444" stroke-width=".8"/><circle cx="7.6" cy="8.4" r="4.600" fill="#c4dcec" fill-opacity=".85" stroke="#555" stroke-width="1.200"/><path d="M4.4 11.8L1.4 15.4" stroke="#2e7ab2" stroke-width="2.200"/></svg>
<svg class="a" style="left:856.5px;top:65.0px;" width="20" height="20" viewBox="0 0 20 20"><path d="M4 6L9.600 2L15 3.400L16 7L19 8.400V13.400L14 15.600L10 17L4 14z" fill="#f4f4f4" stroke="#555" stroke-width="1"/><path d="M12.600 8.600L18.600 8.400V12.800L12.600 13z" fill="#3f88bd" stroke="#1d4c70" stroke-width=".8"/><circle cx="8.2" cy="10.4" r="4.600" fill="#c4dcec" fill-opacity=".85" stroke="#555" stroke-width="1.200"/><path d="M5 13.8L1.4 17.6" stroke="#2e7ab2" stroke-width="2.200"/></svg>
<svg class="a" style="left:856.5px;top:91.0px;" width="20" height="20" viewBox="0 0 20 20"><path d="M6 4.400L12 2L17 5V12.600L11.600 17L6 14z" fill="#f6f6f6" stroke="#555" stroke-width="1"/><path d="M13.600 7.600L18.800 9.600L13.600 11.600z" fill="#3f88bd"/><circle cx="8" cy="10" r="4.600" fill="#c4dcec" fill-opacity=".85" stroke="#555" stroke-width="1.200"/><path d="M4.8 13.4L1.2 17.6" stroke="#2e7ab2" stroke-width="2.200"/></svg>
<svg class="a" style="left:1000.0px;top:39.0px;" width="20" height="20" viewBox="0 0 20 20"><path d="M5.400 1V14.600L11.400 18.600V5z" fill="#f2f2f2" stroke="#444" stroke-width="1"/><path d="M.8 19L5 4.600L8.800 6.400L8.600 17.600z" fill="#4fa2d2" stroke="#1d4c70" stroke-width="1"/><path d="M5 4.600L6.400 17.800" stroke="#8acaea" stroke-width=".8"/><path d="M13.400 5.400L17 4.600L19.400 13L14.600 16.600z" fill="#f4f4f4" stroke="#555" stroke-width="1"/></svg>
<svg class="a" style="left:1000.0px;top:65.0px;" width="20" height="20" viewBox="0 0 20 20"><path d="M1 5.400H5C8 5.400 8 8.400 10 8.400S12 5.400 15 5.400H19V14.600H15C12 14.600 12 11.600 10 11.600S8 14.600 5 14.600H1z" fill="#cfcfcf"/><path d="M1 5.400H5C8 5.400 8 8.400 10 8.400S12 5.400 15 5.400H19M1 14.600H5C8 14.600 8 11.600 10 11.600S12 14.600 15 14.600H19" fill="none" stroke="#444" stroke-width="1"/><path d="M10 1V6M7.800 4.200L10 6.600L12.200 4.200M10 19V14M7.800 15.800L10 13.400L12.200 15.800" fill="none" stroke="#111" stroke-width="1.500"/></svg>
<svg class="a" style="left:1000.0px;top:91.0px;" width="20" height="20" viewBox="0 0 20 20"><path d="M1.600 1.600H8L11 4.600V13.600H1.600z" fill="#f6f6f6" stroke="#555" stroke-width="1"/><path d="M8.400 6.400H15L18.400 9.800V18.600H8.400z" fill="#fafafa" stroke="#444" stroke-width="1"/><path d="M3.600 10.600H8.800M3.600 13.200H8.800" stroke="#111" stroke-width="1.600"/></svg>
<div class="t" style="top:93.15px;left:1010.0px;font-size:13px;color:#2e7ab2;font-weight:bold;letter-spacing:0.00px;">?</div>
<!-- 05_tabs_hud.py -->
<div class="a" style="left:0px;top:116px;width:459px;height:23px;background:#d6d6d6;border:1px solid #8c8c8c;border-left:none;"></div>
<div class="a" style="left:59px;top:117px;width:1px;height:21px;background:#8c8c8c;"></div>
<div class="a" style="left:115px;top:117px;width:1px;height:21px;background:#8c8c8c;"></div>
<div class="a" style="left:175px;top:117px;width:1px;height:21px;background:#8c8c8c;"></div>
<div class="a" style="left:325px;top:117px;width:1px;height:21px;background:#8c8c8c;"></div>
<div class="a" style="left:263px;top:116px;width:62px;height:22px;background:#f7f7f7;border-left:1px solid #8c8c8c;"></div>
<div class="a" style="left:459px;top:117px;width:1461px;height:1px;background:#8c8c8c;top:116px;"></div>
<div class="t" style="top:117.65px;left:8.0px;letter-spacing:-0.48px;">Features</div>
<div class="t" style="top:117.65px;left:70.0px;letter-spacing:-0.44px;">Sketch</div>
<div class="t" style="top:117.65px;left:124.0px;letter-spacing:-0.62px;">Surfaces</div>
<div class="t" style="top:117.65px;left:184.0px;letter-spacing:-0.07px;">Direct Editing</div>
<div class="t" style="top:117.65px;left:334.0px;letter-spacing:-0.49px;">SOLIDWORKS Add-Ins</div>
<div class="t" style="top:117.65px;left:272.0px;letter-spacing:-0.10px;-webkit-text-stroke:0.35px #000;">Evaluate</div>
<svg class="a" style="left:902.5px;top:120.5px;" width="22" height="22" viewBox="0 0 22 22"><path d="M10.524 12.176L4.523999999999999 18.375999999999998" stroke="#62a8d8" stroke-width="3.200" stroke-linecap="round"/><circle cx="14.1" cy="8.6" r="5.8" fill="#e6edf2" stroke="#7a7a7a" stroke-width="1.300"/><path d="M14.100 4.800L15.700 6.600H12.500zM14.100 12.400L15.700 10.600H12.500zM10.300 8.600L12.100 7V10.200zM17.900 8.600L16.100 7V10.200z" fill="#555"/></svg>
<svg class="a" style="left:929.0px;top:120.5px;" width="22" height="22" viewBox="0 0 22 22"><rect x="7.500" y="3" width="13" height="12" fill="none" stroke="#555" stroke-width="1.100" stroke-dasharray="2.600 1.600"/><path d="M8.936000000000002 13.863999999999999L2.9360000000000017 20.064" stroke="#62a8d8" stroke-width="3.200" stroke-linecap="round"/><circle cx="12.8" cy="10" r="6.2" fill="#e6edf2" stroke="#7a7a7a" stroke-width="1.300"/></svg>
<svg class="a" style="left:955.0px;top:120.5px;" width="22" height="22" viewBox="0 0 22 22"><path d="M2 14L13 3.400L17.600 6.600L8 18.600z" fill="#e0e0e0" stroke="#888" stroke-width="1"/><ellipse cx="15.400" cy="5" rx="3" ry="1.700" transform="rotate(35 15.400 5)" fill="#f4f4f4" stroke="#888"/><ellipse cx="5" cy="16.200" rx="3.600" ry="2.200" transform="rotate(35 5 16.200)" fill="#f2f2f2" stroke="#999"/><path d="M11 15H19M14 12L11 15L14 18" fill="none" stroke="#3f8cc4" stroke-width="2"/></svg>
<svg class="a" style="left:981.0px;top:120.5px;" width="22" height="22" viewBox="0 0 22 22"><path d="M2 7C2 3 20 3 20 7V15.600C20 19 14 19 14 15.600V9.400H8V15.600C8 19.600 2 19 2 15.600z" fill="#d8d8d8" stroke="#666" stroke-width="1"/><rect x="2.600" y="8.400" width="5" height="9.600" rx="1" fill="#5aa6d6" stroke="#1d4c70" stroke-width=".8"/><rect x="14.400" y="8.400" width="5" height="9.600" rx="1" fill="#5aa6d6" stroke="#1d4c70" stroke-width=".8"/><path d="M3 12L7 9M3 15L7.400 11.600M3.400 17.600L7.400 14.600M14.800 12L19 9M14.800 15L19 11.600M15.200 17.600L19 14.600" stroke="#cfe6f6" stroke-width=".8"/></svg>
<svg class="a" style="left:1007.0px;top:120.5px;" width="22" height="22" viewBox="0 0 22 22"><path d="M2 12L12.400 3.400L16.600 6L7 17z" fill="#e0e0e0" stroke="#888" stroke-width="1"/><ellipse cx="4.600" cy="14.600" rx="3.400" ry="2" transform="rotate(35 4.600 14.600)" fill="#f2f2f2" stroke="#999"/><path d="M9 1L4 8H8.600L6 13L13.600 5.600H9.400L12.600 1z" fill="#f6b21a" stroke="#e8521a" stroke-width=".8"/></svg>
<div class="t" style="top:124.65px;left:1014.5px;font-size:15px;color:#3f8cc4;letter-spacing:0.00px;font-family:'Liberation Serif',serif;font-weight:bold;">A</div>
<svg class="a" style="left:1033.0px;top:120.5px;" width="22" height="22" viewBox="0 0 22 22"><path d="M2 7.400L7.600 2.400H20V14.400L14.400 19.600" fill="#fafafa" stroke="#444" stroke-width="1"/><path d="M14.400 7.400L20 2.400M14.400 13.400H20M13 2.400V7.400" fill="none" stroke="#444" stroke-width=".9"/><rect x="2" y="7.400" width="12.400" height="12.200" fill="#5aa6d6" stroke="#1d4c70" stroke-width="1"/></svg>
<div class="a" style="left:1060.0px;top:130.5px;width:0;height:0;border-left:3.0px solid transparent;border-right:3.0px solid transparent;border-top:3px solid #9a9a9a;"></div>
<svg class="a" style="left:1073.0px;top:120.5px;" width="22" height="22" viewBox="0 0 22 22"><path d="M3 4.600L10 2L19 4V16.400L10 19.800L3 17z" fill="#f4f4f4" stroke="#777" stroke-width="1"/><path d="M3 4.600L10 6.600V19.800L3 17z" fill="#5aa6d6" stroke="#1d4c70" stroke-width=".9"/><path d="M10 6.600L13 5.800V18.800L10 19.800z" fill="#a8d0ea"/><path d="M3 4.600L10 6.600L19 4L11.400 2.200z" fill="#cfe4f2" stroke="#777" stroke-width=".7"/></svg>
<div class="a" style="left:1100.0px;top:130.5px;width:0;height:0;border-left:3.0px solid transparent;border-right:3.0px solid transparent;border-top:3px solid #9a9a9a;"></div>
<svg class="a" style="left:1113.0px;top:120.5px;" width="22" height="22" viewBox="0 0 22 22"><path d="M1.600 11C5 5.400 17 5.400 20.400 11C17 16.600 5 16.600 1.600 11z" fill="#f0f0f0" stroke="#b8b8b8" stroke-width="1.300"/><circle cx="11" cy="11" r="4.200" fill="#a4a4a4"/><circle cx="11" cy="11" r="2" fill="#6a6a6a"/><path d="M11.400 3.500V18.500" stroke="#7a7a7a" stroke-width="1"/></svg>
<div class="a" style="left:1140.0px;top:130.5px;width:0;height:0;border-left:3.0px solid transparent;border-right:3.0px solid transparent;border-top:3px solid #9a9a9a;"></div>
<svg class="a" style="left:1153.0px;top:120.5px;" width="22" height="22" viewBox="0 0 22 22"><defs><clipPath id="bc1"><circle cx="9" cy="9" r="7.6"/></clipPath></defs><g clip-path="url(#bc1)"><rect x="0" y="0" width="9" height="9" fill="#4a8ee0"/><rect x="9" y="0" width="22" height="9" fill="#e8443a"/><rect x="0" y="9" width="9" height="22" fill="#3ab04a"/><rect x="9" y="9" width="22" height="22" fill="#f6d23a"/><path d="M9 9L13 0H9zM9 9L0 13V9z" fill="#fff" fill-opacity=".18"/></g><circle cx="9" cy="9" r="7.6" fill="none" stroke="#fff" stroke-opacity=".4"/><path d="M9.600 17.600L17.600 8.600L20.600 11.200L12.600 20.200L8.600 21.400z" fill="#f6dc6a" stroke="#555" stroke-width=".9"/><path d="M17.600 8.600L20.600 11.200L21.400 10.200L18.600 7.600z" fill="#e8443a" stroke="#555" stroke-width=".7"/></svg>
<svg class="a" style="left:1179.0px;top:120.5px;" width="22" height="22" viewBox="0 0 22 22"><rect x="2" y="10" width="18" height="11" fill="#444"/><g fill="#f2f2f2"><rect x="3.400" y="17.600" width="3" height="2.600"/><rect x="9.400" y="17.600" width="3" height="2.600"/><rect x="15.400" y="17.600" width="3" height="2.600"/></g><defs><clipPath id="bc2"><circle cx="11" cy="9.4" r="7.8"/></clipPath></defs><g clip-path="url(#bc2)"><rect x="0" y="0" width="11" height="9.4" fill="#4a8ee0"/><rect x="11" y="0" width="22" height="9.4" fill="#e8443a"/><rect x="0" y="9.4" width="11" height="22" fill="#3ab04a"/><rect x="11" y="9.4" width="22" height="22" fill="#f6d23a"/><path d="M11 9.4L15 0H11zM11 9.4L0 13V9.4z" fill="#fff" fill-opacity=".18"/></g><circle cx="11" cy="9.4" r="7.8" fill="none" stroke="#fff" stroke-opacity=".4"/></svg>
<div class="a" style="left:1206.0px;top:130.5px;width:0;height:0;border-left:3.0px solid transparent;border-right:3.0px solid transparent;border-top:3px solid #9a9a9a;"></div>
<svg class="a" style="left:1220.0px;top:120.5px;" width="22" height="22" viewBox="0 0 22 22"><rect x="2.400" y="3.400" width="17.200" height="11.600" fill="#dcdcdc" stroke="#555" stroke-width="1.300"/><path d="M11 15V18.400M7 19H15" stroke="#555" stroke-width="1.600"/></svg>
<div class="a" style="left:1247.0px;top:130.5px;width:0;height:0;border-left:3.0px solid transparent;border-right:3.0px solid transparent;border-top:3px solid #9a9a9a;"></div>
<svg class="a" style="left:1789px;top:125px;" width="12" height="14" viewBox="0 0 12 14"><rect x=".6" y=".6" width="10.800" height="12.800" fill="none" stroke="#a8a8a8" stroke-width="1.100"/><path d="M5.600 4.600L2.600 7L5.600 9.400z" fill="#a8a8a8"/><path d="M2.400 2V12" stroke="#a8a8a8" stroke-width=".8"/></svg>
<svg class="a" style="left:1816px;top:125px;" width="12" height="14" viewBox="0 0 12 14"><rect x=".6" y=".6" width="10.800" height="12.800" fill="none" stroke="#a8a8a8" stroke-width="1.100"/><path d="M6.400 4.600L9.400 7L6.400 9.400z" fill="#a8a8a8"/><path d="M9.600 2V12" stroke="#a8a8a8" stroke-width=".8"/></svg>
<div class="a" style="left:1843px;top:135px;width:10px;height:2px;background:#b4b4b4;"></div>
<svg class="a" style="left:1867px;top:125px;" width="16" height="14" viewBox="0 0 16 14"><path d="M5.400 4V1H15V8.400H11.400" fill="none" stroke="#b0b0b0" stroke-width="1.200"/><rect x="1" y="4.600" width="10" height="8" fill="none" stroke="#b0b0b0" stroke-width="1.200"/></svg>
<svg class="a" style="left:1894px;top:126px;" width="12" height="12" viewBox="0 0 12 12"><path d="M1 1L11 11M11 1L1 11" stroke="#b4b4b4" stroke-width="1.300"/></svg>
<!-- 06_leftpanel.py -->
<div class="a" style="left:0px;top:139px;width:242px;height:2px;background:#fdfdfd;"></div>
<div class="a" style="left:0px;top:141px;width:240px;height:1px;background:#d4d4d4;"></div>
<div class="a" style="left:0px;top:156px;width:240px;height:1px;background:#d0d0d0;"></div>
<svg class="a" style="left:116px;top:145px;" width="8" height="8" viewBox="0 0 8 8"><circle cx="4" cy="4" r="2.600" fill="#c4c4c4" stroke="#a8a8a8" stroke-width=".8"/></svg>
<div class="a" style="left:40px;top:161px;width:160px;height:26px;background:#d4d4d4;border:1px solid #8c8c8c;"></div>
<div class="a" style="left:79px;top:162px;width:1px;height:24px;background:#8c8c8c;"></div>
<div class="a" style="left:119px;top:162px;width:1px;height:24px;background:#8c8c8c;"></div>
<div class="a" style="left:159px;top:162px;width:1px;height:24px;background:#8c8c8c;"></div>
<div class="a" style="left:0px;top:186px;width:40px;height:1px;background:#f7f7f7;"></div>
<svg class="a" style="left:10px;top:163px;" width="20" height="20" viewBox="0 0 20 20"><path d="M6.500 3.500L10.200 1.400L14.500 3.200V8.200L18.100 10V15.400L12.700 19L1.900 11.800V7.200L6.500 5.200z" fill="#f0c21a" stroke="#5a4608" stroke-width="1.100" stroke-linejoin="round"/><path d="M6.500 3.500L10.200 1.400L14.500 3.200L10.800 5.400z" fill="#fde98a"/><path d="M10.800 10.600L14.500 8.300L18.100 10L14.300 12.400z" fill="#fde98a"/><path d="M1.900 7.200L6.500 5.200V8.400L4.400 9.400z" fill="#fde98a"/><path d="M14.300 12.400L18.100 10V15.400L12.700 19V13.400z" fill="#d9a90f"/><path d="M10.800 5.400L14.500 3.200V8.300L10.800 10.600z" fill="#d9a90f"/><path d="M6.500 3.500L10.800 5.400V10.600L14.300 12.400L12.700 13.400V19M1.900 7.200L12.700 13.400" fill="none" stroke="#5a4608" stroke-width=".8"/></svg>
<svg class="a" style="left:50px;top:163px;" width="20" height="20" viewBox="0 0 20 20"><rect x="2" y="2" width="16" height="16" rx="1" fill="#fff" stroke="#1d4c70" stroke-width="1.200"/><rect x="2" y="2" width="16" height="3" fill="#4a9ad0"/><g fill="#3f9bd4" stroke="#1d4c70" stroke-width=".6"><rect x="4" y="7" width="3.600" height="2"/><rect x="4" y="10.600" width="3.600" height="2"/><rect x="4" y="14.200" width="3.600" height="2"/></g><path d="M9.400 8H16M9.400 11.600H16M9.400 15.200H16" stroke="#222" stroke-width="1"/></svg>
<svg class="a" style="left:90px;top:163px;" width="20" height="20" viewBox="0 0 20 20"><path d="M4 2V18M4 4.600H9M4 15H10" fill="none" stroke="#333" stroke-width="1.300"/><rect x="2.400" y="1.600" width="3.200" height="3.200" fill="#fff" stroke="#333" stroke-width="1"/><rect x="8.600" y="2.600" width="5" height="5" rx="1" fill="#fff" stroke="#333" stroke-width="1.200"/><rect x="10.600" y="11.600" width="5.400" height="5.400" rx="1" fill="#fff" stroke="#333" stroke-width="1.200"/><path d="M2.400 18H5.600" stroke="#333" stroke-width="1.300"/></svg>
<svg class="a" style="left:130px;top:163px;" width="20" height="20" viewBox="0 0 20 20"><circle cx="10" cy="10" r="5.800" fill="none" stroke="#111" stroke-width="1.700"/><path d="M10 1V19M1 10H19" stroke="#111" stroke-width="1.500"/></svg>
<svg class="a" style="left:170px;top:163px;" width="20" height="20" viewBox="0 0 20 20"><defs><clipPath id="bc3"><circle cx="10" cy="10" r="8.600"/></clipPath><radialGradient id="bsh" cx=".4" cy=".3" r=".8"><stop offset="0" stop-color="#fff" stop-opacity=".35"/><stop offset="1" stop-color="#000" stop-opacity=".15"/></radialGradient></defs><g clip-path="url(#bc3)"><rect width="10" height="12" fill="#3a6ee0"/><rect x="10" width="10" height="12" fill="#e0281a"/><rect y="12" width="10" height="8" fill="#2aa83a"/><rect x="10" y="12" width="10" height="8" fill="#f2c81e"/><path d="M0 12L10 9L20 12V14L10 11L0 14z" fill="#fff" fill-opacity=".25"/><ellipse cx="14.200" cy="7" rx="2.800" ry="5" transform="rotate(-28 14.200 7)" fill="#1a1a1a"/><rect width="20" height="20" fill="url(#bsh)"/></g></svg>
<svg class="a" style="left:227px;top:167px;" width="10" height="12" viewBox="0 0 10 12"><path d="M2.400 1.400L7.400 6L2.400 10.600" fill="none" stroke="#333" stroke-width="1.700"/></svg>
<div class="a" style="left:3px;top:187px;width:236px;height:26px;background:#f8f8f8;border:1px solid #d2d2d2;"></div>
<svg class="a" style="left:5px;top:191px;" width="20" height="20" viewBox="0 0 20 20"><path d="M1.600 2.400H17.200L11 10V17L8 18.400V10z" fill="#fafafa" stroke="#333" stroke-width="1.100"/><path d="M1.400 1.600H17.400V3.800H1.400z" fill="#3f94c8" stroke="#1d4c70" stroke-width=".6"/></svg>
<svg class="a" style="left:2px;top:214px;" width="20" height="20" viewBox="0 0 20 20"><path d="M6.500 3.500L10.200 1.400L14.500 3.200V8.200L18.100 10V15.400L12.700 19L1.900 11.800V7.200L6.500 5.200z" fill="#f0c21a" stroke="#5a4608" stroke-width="1.100" stroke-linejoin="round"/><path d="M6.500 3.500L10.200 1.400L14.500 3.200L10.800 5.400z" fill="#fde98a"/><path d="M10.800 10.600L14.500 8.300L18.100 10L14.300 12.400z" fill="#fde98a"/><path d="M1.900 7.200L6.500 5.200V8.400L4.400 9.400z" fill="#fde98a"/><path d="M14.300 12.400L18.100 10V15.400L12.700 19V13.400z" fill="#d9a90f"/><path d="M10.800 5.400L14.500 3.200V8.300L10.800 10.600z" fill="#d9a90f"/><path d="M6.500 3.500L10.800 5.400V10.600L14.300 12.400L12.700 13.400V19M1.900 7.200L12.700 13.400" fill="none" stroke="#5a4608" stroke-width=".8"/></svg>
<div class="t" style="top:214.65px;left:25.0px;letter-spacing:-0.17px;">Water Bottle (SSM) (Default) &lt;Blue&gt;</div>
<svg class="a" style="left:24.5px;top:236.0px;" width="22" height="22" viewBox="0 0 22 22"><g transform="translate(-1.100 -.700) scale(1.120 1.100)"><path d="M1.600 3.200Q1.600 2 2.800 2H7L8.600 3.800H16.400Q17.400 3.800 17.400 4.800V16.800H1.600z" fill="#f1f1f1" stroke="#333" stroke-width="1.100"/><path d="M1.600 5.600H17.400" stroke="#666" stroke-width=".7"/><circle cx="10.200" cy="11.200" r="4" fill="#fff" stroke="#2e7ab2" stroke-width="1.200"/><path d="M10.200 8.800V11.400L12.200 12.400" fill="none" stroke="#222" stroke-width=".9"/><path d="M4.400 10.400L6 12.600L7.800 10.600" fill="none" stroke="#2e7ab2" stroke-width="1.200"/></g></svg>
<div class="t" style="top:236.65px;left:48.0px;letter-spacing:0.11px;">History</div>
<svg class="a" style="left:7px;top:241.0px;" width="6" height="10" viewBox="0 0 6 10"><path d="M1 1L5 5L1 9z" fill="#7a7a7a"/></svg>
<svg class="a" style="left:24.5px;top:258.0px;" width="22" height="22" viewBox="0 0 22 22"><g transform="translate(-1.100 -.700) scale(1.120 1.100)"><path d="M1.600 3.200Q1.600 2 2.800 2H7L8.600 3.800H16.400Q17.400 3.800 17.400 4.800V16.800H1.600z" fill="#f1f1f1" stroke="#333" stroke-width="1.100"/><path d="M1.600 5.600H17.400" stroke="#666" stroke-width=".7"/><circle cx="10.200" cy="11.400" r="4.200" fill="#fff" stroke="#333" stroke-width="1.100"/><path d="M10.200 11.400L12.600 8.600" stroke="#2e7ab2" stroke-width="1.200"/><path d="M11.600 12.400L14 11.400L13.400 14z" fill="#e0281a"/></g></svg>
<div class="t" style="top:258.65px;left:48.0px;letter-spacing:-0.67px;">Sensors</div>
<svg class="a" style="left:24.5px;top:280.0px;" width="22" height="22" viewBox="0 0 22 22"><g transform="translate(-1.100 -.700) scale(1.120 1.100)"><path d="M1.600 3.200Q1.600 2 2.800 2H7L8.600 3.800H16.400Q17.400 3.800 17.400 4.800V16.800H1.600z" fill="#f1f1f1" stroke="#333" stroke-width="1.100"/><path d="M1.600 5.600H17.400" stroke="#666" stroke-width=".7"/></g></svg>
<div class="t" style="top:280.65px;left:48.0px;letter-spacing:0.16px;">Annotations</div>
<svg class="a" style="left:7px;top:285.0px;" width="6" height="10" viewBox="0 0 6 10"><path d="M1 1L5 5L1 9z" fill="#7a7a7a"/></svg>
<svg class="a" style="left:24.5px;top:302.0px;" width="22" height="22" viewBox="0 0 22 22"><g transform="translate(-1.100 -.700) scale(1.120 1.100)"><path d="M1.600 3.200Q1.600 2 2.800 2H7L8.600 3.800H16.400Q17.400 3.800 17.400 4.800V16.800H1.600z" fill="#f1f1f1" stroke="#333" stroke-width="1.100"/><path d="M1.600 5.600H17.400" stroke="#666" stroke-width=".7"/><path d="M4 11.400L10.400 7.400C11.600 9 13.400 9.600 15.400 9.400L9.600 14.800C7.600 14.800 5.400 13.600 4 11.400z" fill="#3f88bd" stroke="#1d4c70" stroke-width=".8"/></g></svg>
<div class="t" style="top:302.65px;left:48.0px;letter-spacing:-0.34px;">Surface Bodies</div>
<svg class="a" style="left:24.5px;top:324.0px;" width="22" height="22" viewBox="0 0 22 22"><g transform="translate(-1.100 -.700) scale(1.120 1.100)"><path d="M1.600 3.200Q1.600 2 2.800 2H7L8.600 3.800H16.400Q17.400 3.800 17.400 4.800V16.800H1.600z" fill="#f1f1f1" stroke="#333" stroke-width="1.100"/><path d="M1.600 5.600H17.400" stroke="#666" stroke-width=".7"/><path d="M6.600 9.200L10 7.600L13.400 9.200V13.200L10 15L6.600 13.200z" fill="#3f94c8" stroke="#1d4c70" stroke-width=".9"/><path d="M6.600 9.200L10 10.800L13.400 9.200M10 10.800V15" fill="none" stroke="#1d4c70" stroke-width=".8"/></g></svg>
<div class="t" style="top:324.65px;left:48.0px;letter-spacing:-0.28px;">Solid Bodies(1)</div>
<svg class="a" style="left:5px;top:331.0px;" width="10" height="6" viewBox="0 0 10 6"><path d="M1 1H9L5 5z" fill="#6a6a6a"/></svg>
<div class="a" style="left:45px;top:345px;width:81px;height:22px;background:#a9cdea;border:1px solid #62a2d8;"></div>
<svg class="a" style="left:48px;top:346px;" width="20" height="20" viewBox="0 0 20 20"><defs><linearGradient id="cbg" x1="0" y1="0" x2="1" y2="1"><stop offset="0" stop-color="#8ed0ee"/><stop offset="1" stop-color="#3f8ebc"/></linearGradient></defs><path d="M1.600 5.600Q1.600 4.400 2.800 4L8.600 1.800Q9.600 1.400 10.600 1.800L16.200 3.400Q17.200 3.800 17.200 4.800V13.600Q17.200 14.600 16.200 15L9.400 18Q8.400 18.400 7.400 18L2.600 15.800Q1.600 15.400 1.600 14.200z" fill="url(#cbg)" stroke="#1d4c70" stroke-width="1"/><path d="M2 5L8.400 7.600L17 4.400M8.400 7.600V18" fill="none" stroke="#1d4c70" stroke-width=".9"/></svg>
<div class="t" style="top:346.65px;left:71.0px;letter-spacing:-0.19px;">Intersect4</div>
<svg class="a" style="left:24.5px;top:368.0px;" width="22" height="22" viewBox="0 0 22 22"><g transform="translate(-1.100 -.700) scale(1.120 1.100)"><path d="M1.600 3.200Q1.600 2 2.800 2H7L8.600 3.800H16.400Q17.400 3.800 17.400 4.800V16.800H1.600z" fill="#f1f1f1" stroke="#333" stroke-width="1.100"/><path d="M1.600 5.600H17.400" stroke="#666" stroke-width=".7"/></g></svg>
<div class="t" style="top:368.65px;left:48.0px;letter-spacing:-0.17px;">Equations</div>
<svg class="a" style="left:7px;top:373.0px;" width="6" height="10" viewBox="0 0 6 10"><path d="M1 1L5 5L1 9z" fill="#7a7a7a"/></svg>
<svg class="a" style="left:24.5px;top:390.0px;" width="22" height="22" viewBox="0 0 22 22"><g transform="translate(-1.100 -.700) scale(1.120 1.100)"><path d="M6 3H17.600M6 8.600H17.600M6 14.200H11" stroke="#333" stroke-width="1.500"/><circle cx="2.600" cy="3" r="1.700" fill="#fff" stroke="#555" stroke-width=".9"/><circle cx="2.600" cy="8.600" r="1.800" fill="#5ab0dc" stroke="#1d4c70" stroke-width=".9"/><circle cx="2.600" cy="14.200" r="1.800" fill="#f2c81e" stroke="#7a5a08" stroke-width=".9"/><circle cx="14.600" cy="15" r="2.600" fill="none" stroke="#222" stroke-width="2.200" stroke-dasharray="1.500 1.100"/><circle cx="14.600" cy="15" r="1.600" fill="#222"/></g></svg>
<div class="t" style="top:390.65px;left:48.0px;letter-spacing:0.03px;">Material &lt;not specified&gt;</div>
<svg class="a" style="left:24.5px;top:412.0px;" width="22" height="22" viewBox="0 0 22 22"><g transform="translate(-1.100 -.700) scale(1.120 1.100)"><path d="M4.600 4.400L14.400 2.400V15.600L4.600 17.600z" fill="#fcfcfc" stroke="#333" stroke-width="1"/><path d="M9.600 1V19.400" stroke="#222" stroke-width="1" stroke-dasharray="2.400 1.400"/></g></svg>
<div class="t" style="top:412.65px;left:48.0px;letter-spacing:-0.20px;">Front Plane</div>
<svg class="a" style="left:24.5px;top:434.0px;" width="22" height="22" viewBox="0 0 22 22"><g transform="translate(-1.100 -.700) scale(1.120 1.100)"><path d="M4.600 4.400L14.400 2.400V15.600L4.600 17.600z" fill="#fcfcfc" stroke="#333" stroke-width="1"/><path d="M9.600 1V19.400" stroke="#222" stroke-width="1" stroke-dasharray="2.400 1.400"/></g></svg>
<div class="t" style="top:434.65px;left:48.0px;letter-spacing:-0.17px;">Top Plane</div>
<svg class="a" style="left:24.5px;top:456.0px;" width="22" height="22" viewBox="0 0 22 22"><g transform="translate(-1.100 -.700) scale(1.120 1.100)"><path d="M4.600 4.400L14.400 2.400V15.600L4.600 17.600z" fill="#fcfcfc" stroke="#333" stroke-width="1"/><path d="M9.600 1V19.400" stroke="#222" stroke-width="1" stroke-dasharray="2.400 1.400"/></g></svg>
<div class="t" style="top:456.65px;left:48.0px;letter-spacing:-0.20px;">Right Plane</div>
<svg class="a" style="left:24.5px;top:478.0px;" width="22" height="22" viewBox="0 0 22 22"><g transform="translate(-1.100 -.700) scale(1.120 1.100)"><path d="M4.600 2.600V16H17" fill="none" stroke="#111" stroke-width="1.500"/><path d="M4.600 .6L2.600 4.200H6.600zM19 16L15.400 14V18z" fill="#111"/><rect x="3.200" y="14.600" width="2.800" height="2.800" fill="#111"/></g></svg>
<div class="t" style="top:478.65px;left:48.0px;letter-spacing:0.20px;">Origin</div>
<svg class="a" style="left:24.5px;top:500.0px;" width="22" height="22" viewBox="0 0 22 22"><g transform="translate(-1.100 -.700) scale(1.120 1.100)"><defs><linearGradient id="bf1" x1="0" y1="0" x2="0" y2="1"><stop offset="0" stop-color="#5ab0dc"/><stop offset="1" stop-color="#2e7eac"/></linearGradient></defs><path d="M1.400 3Q1.400 2 2.400 2H6.600L8.200 3.800H16.600Q17.600 3.800 17.600 4.800V17H1.400z" fill="url(#bf1)" stroke="#1d4c70" stroke-width="1"/><path d="M1.800 5.400H17.200" stroke="#8acaea" stroke-width=".8"/></g></svg>
<div class="t" style="top:500.65px;left:48.0px;letter-spacing:-0.26px;">Reference Geometry</div>
<svg class="a" style="left:7px;top:505.0px;" width="6" height="10" viewBox="0 0 6 10"><path d="M1 1L5 5L1 9z" fill="#7a7a7a"/></svg>
<svg class="a" style="left:24.5px;top:522.0px;" width="22" height="22" viewBox="0 0 22 22"><g transform="translate(-1.100 -.700) scale(1.120 1.100)"><defs><linearGradient id="bf2" x1="0" y1="0" x2="0" y2="1"><stop offset="0" stop-color="#5ab0dc"/><stop offset="1" stop-color="#2e7eac"/></linearGradient></defs><path d="M1.400 3Q1.400 2 2.400 2H6.600L8.200 3.800H16.600Q17.600 3.800 17.600 4.800V17H1.400z" fill="url(#bf2)" stroke="#1d4c70" stroke-width="1"/><path d="M1.800 5.400H17.200" stroke="#8acaea" stroke-width=".8"/></g></svg>
<div class="t" style="top:522.65px;left:48.0px;letter-spacing:-0.12px;">Body</div>
<svg class="a" style="left:7px;top:527.0px;" width="6" height="10" viewBox="0 0 6 10"><path d="M1 1L5 5L1 9z" fill="#7a7a7a"/></svg>
<svg class="a" style="left:24.5px;top:544.0px;" width="22" height="22" viewBox="0 0 22 22"><g transform="translate(-1.100 -.700) scale(1.120 1.100)"><defs><linearGradient id="bf3" x1="0" y1="0" x2="0" y2="1"><stop offset="0" stop-color="#5ab0dc"/><stop offset="1" stop-color="#2e7eac"/></linearGradient></defs><path d="M1.400 3Q1.400 2 2.400 2H6.600L8.200 3.800H16.600Q17.600 3.800 17.600 4.800V17H1.400z" fill="url(#bf3)" stroke="#1d4c70" stroke-width="1"/><path d="M1.800 5.400H17.200" stroke="#8acaea" stroke-width=".8"/></g></svg>
<div class="t" style="top:544.65px;left:48.0px;letter-spacing:-0.40px;">Thread</div>
<svg class="a" style="left:7px;top:549.0px;" width="6" height="10" viewBox="0 0 6 10"><path d="M1 1L5 5L1 9z" fill="#7a7a7a"/></svg>
<svg class="a" style="left:24.5px;top:566.0px;" width="22" height="22" viewBox="0 0 22 22"><g transform="translate(-1.100 -.700) scale(1.120 1.100)"><defs><linearGradient id="bf4" x1="0" y1="0" x2="0" y2="1"><stop offset="0" stop-color="#5ab0dc"/><stop offset="1" stop-color="#2e7eac"/></linearGradient></defs><path d="M1.400 3Q1.400 2 2.400 2H6.600L8.200 3.800H16.600Q17.600 3.800 17.600 4.800V17H1.400z" fill="url(#bf4)" stroke="#1d4c70" stroke-width="1"/><path d="M1.800 5.400H17.200" stroke="#8acaea" stroke-width=".8"/></g></svg>
<div class="t" style="top:566.65px;left:48.0px;letter-spacing:0.16px;">Volume Window</div>
<svg class="a" style="left:7px;top:571.0px;" width="6" height="10" viewBox="0 0 6 10"><path d="M1 1L5 5L1 9z" fill="#7a7a7a"/></svg>
<svg class="a" style="left:24.5px;top:588.0px;" width="22" height="22" viewBox="0 0 22 22"><g transform="translate(-1.100 -.700) scale(1.120 1.100)"><path d="M4.600 4.400L14.400 2.400V15.600L4.600 17.600z" fill="#4a98c8" stroke="#1d4c70" stroke-width="1"/><path d="M9.600 1V19.400" stroke="#1d3c50" stroke-width="1" stroke-dasharray="2.400 1.400"/></g></svg>
<div class="t" style="top:588.65px;left:48.0px;letter-spacing:-0.26px;">Fill Level</div>
<svg class="a" style="left:24.5px;top:610.0px;" width="22" height="22" viewBox="0 0 22 22"><g transform="translate(-1.100 -.700) scale(1.120 1.100)"><path d="M1.600 9.600L6 8.400V14.400C9 15 13 13 17.600 9.400V12.400C13 16 9 18 6 17.400L1.600 19z" fill="#3f88bd" stroke="#1d4c70" stroke-width=".8"/><path d="M5.600 4.400L10 2L15.400 4V10.400L10.400 13.200L5.600 11z" fill="#fbfbfb" stroke="#555" stroke-width="1"/><path d="M5.600 4.400L10.400 6.600L15.400 4M10.400 6.600V13.200" fill="none" stroke="#777" stroke-width=".8"/></g></svg>
<div class="t" style="top:610.65px;left:48.0px;letter-spacing:-0.19px;">Intersect4</div>
<div class="t" style="top:282.65px;left:30.5px;color:#2e7ab2;letter-spacing:0.00px;font-family:'Liberation Serif',serif;font-weight:bold;">A</div>
<div class="t" style="top:370.15px;left:30.5px;color:#111;letter-spacing:0.00px;font-family:'Liberation Serif',serif;">Σ</div>
<div class="a" style="left:0px;top:631px;width:240px;height:3px;background:#2b87d3;"></div>
<!-- 07_viewport.py -->
<svg class="a" style="left:0;top:139px;" width="1920" height="905" viewBox="0 139 1920 905"><defs><linearGradient id="gside" gradientUnits="userSpaceOnUse" x1="781" y1="0" x2="1216" y2="0"><stop offset="0" stop-color="#6ad6fc"/><stop offset=".25" stop-color="#72dcfc"/><stop offset=".5" stop-color="#80e6fd"/><stop offset=".68" stop-color="#8aedfe"/></linearGradient><linearGradient id="gright" gradientUnits="userSpaceOnUse" x1="1074" y1="0" x2="1216" y2="0"><stop offset="0" stop-color="#58bbfc"/><stop offset=".45" stop-color="#62c6fd"/><stop offset="1" stop-color="#66cafe"/></linearGradient><linearGradient id="gtop" gradientUnits="userSpaceOnUse" x1="781" y1="500" x2="1216" y2="470"><stop offset="0" stop-color="#0f79e5"/><stop offset=".45" stop-color="#117be7"/><stop offset=".62" stop-color="#1c86f2"/><stop offset=".74" stop-color="#2e98fc"/><stop offset=".84" stop-color="#55bdfd"/><stop offset=".93" stop-color="#80ecfe"/><stop offset="1" stop-color="#8af4fe"/></linearGradient><linearGradient id="gfloor" x1="0" y1="0" x2="0" y2="1"><stop offset="0" stop-color="#dde7fa"/><stop offset=".35" stop-color="#e4ecfb"/><stop offset="1" stop-color="#ffffff"/></linearGradient><linearGradient id="gfloor2" x1="0" y1="0" x2="0" y2="1"><stop offset="0" stop-color="#f0f8ff" stop-opacity="0"/><stop offset=".2" stop-color="#eef7fe"/><stop offset="1" stop-color="#ffffff"/></linearGradient><clipPath id="cbody"><path d="M781.2 505.5L795.9 826.3L796.6 816.1L796.1 821.0L796.1 830.6L796.6 835.5L797.5 840.3L798.7 845.1L800.3 849.8L802.2 854.5L804.5 859.2L807.1 863.8L810.0 868.3L813.2 872.7L816.7 877.1L820.6 881.3L824.8 885.5L829.2 889.6L834.0 893.5L839.0 897.4L844.4 901.1L849.9 904.7L855.8 908.1L861.8 911.4L868.2 914.5L874.7 917.5L881.4 920.4L888.4 923.0L895.5 925.5L902.9 927.9L910.3 930.0L918.0 932.0L925.7 933.7L933.6 935.3L941.6 936.7L949.7 937.9L957.9 938.9L966.2 939.7L974.5 940.4L982.9 940.8L991.2 941.0L999.6 941.0L1008.0 940.8L1016.4 940.4L1024.7 939.8L1033.0 939.0L1041.3 938.1L1049.4 936.9L1057.5 935.5L1065.5 933.9L1073.3 932.2L1081.1 930.2L1088.7 928.1L1096.1 925.8L1103.4 923.4L1110.4 920.7L1117.3 917.9L1124.0 914.9L1130.5 911.8L1136.7 908.5L1142.8 905.1L1148.5 901.5L1154.0 897.8L1159.3 894.0L1164.2 890.1L1168.9 886.0L1173.3 881.9L1177.3 877.6L1181.1 873.3L1184.6 868.8L1187.7 864.3L1190.5 859.7L1193.0 855.1L1195.2 850.4L1197.0 845.7L1198.5 840.9L1199.6 836.1L1200.4 831.2L1200.8 826.4L1200.9 821.6L1200.6 816.7L1200.0 811.9L1200.9 822.1L1215.4 465.1Z"/></clipPath></defs><rect x="796" y="822" width="405" height="214" fill="url(#gfloor)"/><rect x="796" y="822" width="16" height="214" fill="#f7fdff" fill-opacity=".8"/><rect x="791" y="850" width="5" height="186" fill="url(#gfloor2)"/><rect x="1201" y="850" width="2.500" height="186" fill="url(#gfloor2)"/><rect x="1024" y="822" width="94" height="214" fill="#fafeff" fill-opacity=".85"/><rect x="1193" y="822" width="8" height="214" fill="#f7fdff" fill-opacity=".8"/><path d="M1019.3 277.3L1357.3 472.3L973.6 694.2L635.6 499.2Z" fill="#f5f8fe" stroke="#4c7df0" stroke-width="1"/><path d="M781.2 505.5L795.9 826.3L796.6 816.1L796.1 821.0L796.1 830.6L796.6 835.5L797.5 840.3L798.7 845.1L800.3 849.8L802.2 854.5L804.5 859.2L807.1 863.8L810.0 868.3L813.2 872.7L816.7 877.1L820.6 881.3L824.8 885.5L829.2 889.6L834.0 893.5L839.0 897.4L844.4 901.1L849.9 904.7L855.8 908.1L861.8 911.4L868.2 914.5L874.7 917.5L881.4 920.4L888.4 923.0L895.5 925.5L902.9 927.9L910.3 930.0L918.0 932.0L925.7 933.7L933.6 935.3L941.6 936.7L949.7 937.9L957.9 938.9L966.2 939.7L974.5 940.4L982.9 940.8L991.2 941.0L999.6 941.0L1008.0 940.8L1016.4 940.4L1024.7 939.8L1033.0 939.0L1041.3 938.1L1049.4 936.9L1057.5 935.5L1065.5 933.9L1073.3 932.2L1081.1 930.2L1088.7 928.1L1096.1 925.8L1103.4 923.4L1110.4 920.7L1117.3 917.9L1124.0 914.9L1130.5 911.8L1136.7 908.5L1142.8 905.1L1148.5 901.5L1154.0 897.8L1159.3 894.0L1164.2 890.1L1168.9 886.0L1173.3 881.9L1177.3 877.6L1181.1 873.3L1184.6 868.8L1187.7 864.3L1190.5 859.7L1193.0 855.1L1195.2 850.4L1197.0 845.7L1198.5 840.9L1199.6 836.1L1200.4 831.2L1200.8 826.4L1200.9 821.6L1200.6 816.7L1200.0 811.9L1200.9 822.1L1215.4 465.1Z" fill="url(#gside)"/><g clip-path="url(#cbody)"><path d="M1073.500 560L1090 960H1230V440z" fill="url(#gright)"/><path d="M770 480L791 480L812 900H770z" fill="#50b4fc"/><path d="M770 480L785 480L804 900H770z" fill="#49abfb"/></g><path d="M781.2 505.5L795.9 826.3L796.6 816.1L796.1 821.0L796.1 830.6L796.6 835.5L797.5 840.3L798.7 845.1L800.3 849.8L802.2 854.5L804.5 859.2L807.1 863.8L810.0 868.3L813.2 872.7L816.7 877.1L820.6 881.3L824.8 885.5L829.2 889.6L834.0 893.5L839.0 897.4L844.4 901.1L849.9 904.7L855.8 908.1L861.8 911.4L868.2 914.5L874.7 917.5L881.4 920.4L888.4 923.0L895.5 925.5L902.9 927.9L910.3 930.0L918.0 932.0L925.7 933.7L933.6 935.3L941.6 936.7L949.7 937.9L957.9 938.9L966.2 939.7L974.5 940.4L982.9 940.8L991.2 941.0L999.6 941.0L1008.0 940.8L1016.4 940.4L1024.7 939.8L1033.0 939.0L1041.3 938.1L1049.4 936.9L1057.5 935.5L1065.5 933.9L1073.3 932.2L1081.1 930.2L1088.7 928.1L1096.1 925.8L1103.4 923.4L1110.4 920.7L1117.3 917.9L1124.0 914.9L1130.5 911.8L1136.7 908.5L1142.8 905.1L1148.5 901.5L1154.0 897.8L1159.3 894.0L1164.2 890.1L1168.9 886.0L1173.3 881.9L1177.3 877.6L1181.1 873.3L1184.6 868.8L1187.7 864.3L1190.5 859.7L1193.0 855.1L1195.2 850.4L1197.0 845.7L1198.5 840.9L1199.6 836.1L1200.4 831.2L1200.8 826.4L1200.9 821.6L1200.6 816.7L1200.0 811.9L1200.9 822.1L1215.4 465.1Z" fill="none" stroke="#3f9af6" stroke-width="1.200"/><path d="M1200.9 822.1L1200.7 828.2L1199.9 834.3L1198.6 840.4L1196.7 846.4L1194.3 852.4L1191.4 858.3L1187.9 864.1L1183.9 869.8L1179.4 875.3L1174.4 880.8L1168.9 886.0L1162.9 891.1L1156.5 896.1L1149.7 900.8L1142.4 905.3L1134.8 909.6L1126.8 913.6L1118.4 917.4L1109.7 921.0L1100.7 924.3L1091.4 927.3L1081.9 930.0L1072.1 932.5L1062.1 934.6L1052.0 936.5L1041.7 938.0L1031.3 939.2L1020.8 940.1L1010.2 940.7L999.6 941.0L989.0 940.9L978.5 940.6L967.9 939.9L957.5 938.9L947.2 937.6L937.0 935.9L927.0 934.0L917.2 931.8L907.6 929.2L898.2 926.4L889.1 923.3L880.4 919.9L871.9 916.3L863.8 912.4L856.1 908.3L848.7 903.9L841.8 899.3L835.3 894.6L829.2 889.6L823.7 884.4L818.5 879.1L813.9 873.6L809.8 868.0L806.2 862.3L803.1 856.5L800.6 850.6L798.6 844.6L797.1 838.5L796.3 832.4L795.9 826.3L796.1 820.2L796.9 814.1L798.2 808.0L800.1 802.0L802.5 796.0L805.4 790.1L808.9 784.3L812.9 778.6L817.4 773.1L822.4 767.6L827.9 762.4L833.9 757.3L840.3 752.3L847.1 747.6L854.4 743.1L862.0 738.8L870.0 734.8L878.4 731.0L887.1 727.4L896.1 724.1L905.4 721.1L914.9 718.4L924.7 715.9L934.7 713.8L944.8 711.9L955.1 710.4L965.5 709.2L976.0 708.3L986.6 707.7L997.2 707.4L1007.8 707.5L1018.3 707.8L1028.9 708.5L1039.3 709.5L1049.6 710.8L1059.8 712.5L1069.8 714.4L1079.6 716.6L1089.2 719.2L1098.6 722.0L1107.7 725.1L1116.4 728.5L1124.9 732.1L1133.0 736.0L1140.7 740.1L1148.1 744.5L1155.0 749.1L1161.5 753.8L1167.6 758.8L1173.1 764.0L1178.3 769.3L1182.9 774.8L1187.0 780.4L1190.6 786.1L1193.7 791.9L1196.2 797.8L1198.2 803.8L1199.7 809.9L1200.5 816.0L1200.9 822.1Z" fill="none" stroke="#48a0f7" stroke-width="1.600" stroke-opacity=".95"/><g clip-path="url(#cbody)"><path d="M635.6 499.200L973.600 694.200L1357.300 472.300" fill="none" stroke="#4a92f2" stroke-width="1.300"/></g><path d="M1214.9 458.7L1215.4 465.1L1215.3 471.6L1214.6 478.1L1213.3 484.7L1211.4 491.2L1208.9 497.8L1205.9 504.3L1202.3 510.7L1198.1 517.1L1193.4 523.4L1188.1 529.5L1182.3 535.6L1176.1 541.5L1169.3 547.3L1162.0 552.9L1154.4 558.3L1146.3 563.5L1137.7 568.5L1128.8 573.3L1119.6 577.8L1110.0 582.1L1100.1 586.1L1089.9 589.8L1079.5 593.3L1068.8 596.4L1058.0 599.3L1047.0 601.8L1035.9 604.0L1024.6 605.9L1013.3 607.5L1001.9 608.7L990.6 609.6L979.2 610.1L967.9 610.3L956.7 610.2L945.6 609.7L934.7 608.9L923.9 607.7L913.3 606.2L903.0 604.4L892.9 602.3L883.1 599.8L873.7 597.0L864.5 593.9L855.8 590.5L847.4 586.8L839.4 582.9L831.9 578.6L824.8 574.1L818.2 569.4L812.1 564.5L806.6 559.3L801.5 553.9L797.0 548.3L793.0 542.6L789.6 536.7L786.7 530.7L784.5 524.5L782.8 518.2L781.7 511.9L781.2 505.5L781.3 499.0L782.0 492.5L783.3 485.9L785.2 479.4L787.7 472.8L790.7 466.3L794.3 459.9L798.5 453.5L803.2 447.2L808.5 441.1L814.3 435.0L820.5 429.1L827.3 423.3L834.6 417.7L842.2 412.3L850.3 407.1L858.9 402.1L867.8 397.3L877.0 392.8L886.6 388.5L896.5 384.5L906.7 380.8L917.1 377.3L927.8 374.2L938.6 371.3L949.6 368.8L960.7 366.6L972.0 364.7L983.3 363.1L994.7 361.9L1006.0 361.0L1017.4 360.5L1028.7 360.3L1039.9 360.4L1051.0 360.9L1061.9 361.7L1072.7 362.9L1083.3 364.4L1093.6 366.2L1103.7 368.3L1113.5 370.8L1122.9 373.6L1132.1 376.7L1140.8 380.1L1149.2 383.8L1157.2 387.7L1164.7 392.0L1171.8 396.5L1178.4 401.2L1184.5 406.1L1190.0 411.3L1195.1 416.7L1199.6 422.3L1203.6 428.0L1207.0 433.9L1209.9 439.9L1212.1 446.1L1213.8 452.4L1214.9 458.7Z" fill="url(#gtop)" stroke="#2b8cf4" stroke-width="1"/><g stroke-linecap="round"><path d="M997 653V634" stroke="#c64a74" stroke-width="3"/><path d="M997 653L979 662.500" stroke="#a82a52" stroke-width="3.200"/><path d="M997 653L1015 662" stroke="#a82a52" stroke-width="3.200"/><path d="M997 651V637" stroke="#f4c4d6" stroke-width="1"/></g><path d="M997 627.500L1001 635.500H993z" fill="#c64a74"/><path d="M975.500 664.500L980.200 657.500L983.800 664.200z" fill="#a82a52"/><path d="M1019 663.500L1010.800 663.800L1014.200 657z" fill="#a82a52"/><circle cx="997" cy="633" r="1.500" fill="#fbe4ec"/><circle cx="982" cy="660" r="1.300" fill="#f4c4d6"/><circle cx="1013" cy="659.500" r="1.300" fill="#f4c4d6"/><g fill="#f08ab4" font-family="Liberation Sans, sans-serif" font-size="5"><text x="997" y="622">y</text><text x="973" y="668">z</text><text x="1023" y="667">x</text></g><text x="0" y="0" transform="matrix(.866 .5 -.866 .5 1007.500 287.500)" font-family="Liberation Sans, sans-serif" font-size="16" letter-spacing="3.300" fill="#4f7cf0" stroke="#4f7cf0" stroke-width=".5">Fill Level</text></svg>
<!-- 08_dialog.py -->
<div class="a" style="left:247px;top:141px;width:486px;height:744px;background:#f0f0f0;border:1px solid #6e6e6e;box-shadow:0 4px 14px rgba(0,0,0,.32),0 0 3px rgba(0,0,0,.2);"></div>
<div class="a" style="left:248px;top:142px;width:484px;height:30px;background:#fff;"></div>
<svg class="a" style="left:255px;top:146px;" width="18" height="20" viewBox="0 0 18 20"><path d="M9 1.400V12" stroke="#2e7ab2" stroke-width="1.800"/><path d="M3 5H15" stroke="#1d4c70" stroke-width="1.500"/><path d="M5.600 18.400C5.600 15.600 8 15 8 12.400H10C10 15 12.400 15.600 12.400 18.400z" fill="#3f8cc4" stroke="#1d4c70" stroke-width=".9"/><path d="M.8 9.400H6L5.400 12H1.400z" fill="#e8a83a" stroke="#6a4a08" stroke-width=".9"/><path d="M12 9.400H17.200L16.600 12H12.600z" fill="#e8a83a" stroke="#6a4a08" stroke-width=".9"/><path d="M3.400 5.200L1.400 9.400M3.400 5.200L5.400 9.400M14.600 5.200L12.600 9.400M14.600 5.200L16.600 9.400" stroke="#444" stroke-width=".8"/><circle cx="9" cy="2.600" r="1.600" fill="#2e7ab2"/></svg>
<div class="t" style="top:147.15px;left:277.3px;letter-spacing:-0.29px;">Mass Properties</div>
<div class="a" style="left:613px;top:156px;width:10px;height:1px;background:#222;"></div>
<div class="a" style="left:658px;top:151px;width:10px;height:10px;border:1px solid #c8c8c8;"></div>
<svg class="a" style="left:703px;top:150px;" width="12" height="12" viewBox="0 0 12 12"><path d="M.8 .8L11.200 11.200M11.200 .8L.8 11.200" stroke="#111" stroke-width="1.200"/></svg>
<svg class="a" style="left:262px;top:182px;" width="20" height="20" viewBox="0 0 20 20"><path d="M6.500 3.500L10.200 1.400L14.500 3.200V8.200L18.100 10V15.400L12.700 19L1.900 11.800V7.200L6.500 5.200z" fill="#f0c21a" stroke="#5a4608" stroke-width="1.100" stroke-linejoin="round"/><path d="M6.500 3.500L10.200 1.400L14.500 3.200L10.800 5.400z" fill="#fde98a"/><path d="M10.800 10.600L14.500 8.300L18.100 10L14.300 12.400z" fill="#fde98a"/><path d="M1.900 7.200L6.500 5.200V8.400L4.400 9.400z" fill="#fde98a"/><path d="M14.300 12.400L18.100 10V15.400L12.700 19V13.400z" fill="#d9a90f"/><path d="M10.800 5.400L14.500 3.200V8.300L10.800 10.600z" fill="#d9a90f"/><path d="M6.500 3.500L10.800 5.400V10.600L14.300 12.400L12.700 13.400V19M1.900 7.200L12.700 13.400" fill="none" stroke="#5a4608" stroke-width=".8"/></svg>
<div class="a" style="left:293px;top:177px;width:303px;height:62px;background:#cce4f7;border:2px solid #3c9de8;"></div>
<div class="a" style="left:295px;top:179px;width:299px;height:15.5px;background:#0078d7;"></div>
<div class="t" style="top:175.65px;left:297.2px;color:#fff;letter-spacing:-0.32px;">Intersect4</div>
<div class="a" style="left:294px;top:245px;width:192px;height:21px;background:#cccccc;border:1px solid #bfbfbf;"></div>
<div class="t" style="top:246.15px;left:321.6px;color:#838383;letter-spacing:-0.38px;">Override Mass Properties...</div>
<div class="a" style="left:506px;top:245px;width:90px;height:21px;background:#e1e1e1;border:1px solid #adadad;"></div>
<div class="t" style="top:246.15px;left:522.0px;letter-spacing:-0.50px;"><u>R</u>ecalculate</div>
<div class="a" style="left:630px;top:197px;width:73px;height:21px;background:#e1e1e1;border:2px solid #0078d7;"></div>
<div class="t" style="top:198.15px;left:641.4px;letter-spacing:-0.12px;"><u>O</u>ptions...</div>
<div class="a" style="left:293px;top:275px;width:13px;height:13px;background:#fff;border:1px solid #333;"></div>
<div class="t" style="top:271.65px;left:309.3px;letter-spacing:-0.08px;">Include <u>h</u>idden bodies/components</div>
<div class="a" style="left:293px;top:297px;width:13px;height:13px;background:#fff;border:1px solid #333;"></div>
<div class="t" style="top:293.65px;left:309.3px;letter-spacing:-0.33px;">Create Center of Mass feature</div>
<div class="a" style="left:293px;top:319px;width:13px;height:13px;background:#fff;border:1px solid #333;"></div>
<div class="t" style="top:315.65px;left:309.3px;letter-spacing:-0.38px;">Show weld bead mass</div>
<div class="t" style="top:337.65px;left:293.2px;letter-spacing:-0.19px;">Report coordinate values relative to:</div>
<div class="a" style="left:484px;top:338px;width:218px;height:21px;background:#fff;border:1px solid #7a7a7a;"></div>
<div class="t" style="top:337.65px;left:490.3px;letter-spacing:-0.01px;">-- default --</div>
<svg class="a" style="left:687px;top:344px;" width="12" height="8" viewBox="0 0 12 8"><path d="M1.400 1.400L6 6L10.600 1.400" fill="none" stroke="#444" stroke-width="1.200"/></svg>
<div class="a" style="left:292px;top:364px;width:396px;height:476px;background:#f0f0f0;border-top:1px solid #696969;border-left:2px solid #696969;border-right:1px solid #fff;border-bottom:1px solid #fff;box-shadow:inset 0 1px 0 #a0a0a0;"></div>
<div class="a" style="left:295px;top:367px;width:1px;height:14px;background:#000;"></div>
<div class="t" style="top:364.05px;left:295.0px;letter-spacing:-0.27px;">Mass properties of selected Solid Bodies:</div>
<div class="t" style="top:377.05px;left:310.4px;letter-spacing:-0.17px;">Coordinate system: -- default --</div>
<div class="t" style="top:403.05px;left:295.0px;letter-spacing:-0.20px;">Density = 1.00 grams per milliliter</div>
<div class="t" style="top:429.05px;left:295.0px;letter-spacing:-0.51px;">Mass = 725.01 grams</div>
<div class="t" style="top:455.05px;left:295.0px;letter-spacing:-0.19px;">Volume = 725.01 milliliters</div>
<div class="t" style="top:481.05px;left:295.0px;letter-spacing:-0.37px;">Surface area = 44689.08  square millimeters</div>
<div class="t" style="top:507.05px;left:295.0px;letter-spacing:-0.37px;">Center of mass: ( millimeters )</div>
<div class="t" style="top:520.05px;left:315.0px;letter-spacing:-0.60px;">X = 0.00</div>
<div class="t" style="top:533.05px;left:315.0px;letter-spacing:-0.75px;">Y = 52.57</div>
<div class="t" style="top:546.05px;left:315.0px;letter-spacing:-0.42px;">Z = -0.06</div>
<div class="a" style="left:295px;top:570px;width:391px;height:26px;overflow:hidden;">
<div class="t" style="top:2.05px;left:0.0px;letter-spacing:-0.19px;">Principal axes of inertia and principal moments of inertia: ( grams *  square millimeters )</div>
</div>
<div class="t" style="top:585.05px;left:295.0px;letter-spacing:-0.26px;">Taken at the center of mass.</div>
<div class="t" style="top:598.05px;left:318.0px;letter-spacing:-0.50px;">Ix = ( 0.00,  1.00,  0.01)</div>
<div class="t" style="top:598.05px;left:455.4px;letter-spacing:-0.71px;">Px = 866972.85</div>
<div class="t" style="top:611.05px;left:318.0px;letter-spacing:-0.50px;">Iy = ( 0.00, -0.01,  1.00)</div>
<div class="t" style="top:611.05px;left:455.4px;letter-spacing:-0.71px;">Py = 966815.93</div>
<div class="t" style="top:624.05px;left:318.0px;letter-spacing:-0.50px;">Iz = ( 1.00,  0.00,  0.00)</div>
<div class="t" style="top:624.05px;left:455.4px;letter-spacing:-0.68px;">Pz = 1034043.11</div>
<div class="t" style="top:650.05px;left:295.0px;letter-spacing:-0.23px;">Moments of inertia: ( grams *  square millimeters )</div>
<div class="t" style="top:663.05px;left:295.0px;letter-spacing:-0.12px;">Taken at the center of mass and aligned with the output coordinate system.</div>
<div class="t" style="top:676.05px;left:315.0px;letter-spacing:-0.66px;">Lxx = 1034043.09</div>
<div class="t" style="top:676.05px;left:455.4px;letter-spacing:-0.70px;">Lxy = 0.38</div>
<div class="t" style="top:676.05px;left:595.2px;letter-spacing:-0.62px;">Lxz = -39.33</div>
<div class="t" style="top:689.05px;left:315.0px;letter-spacing:-0.62px;">Lyx = 0.38</div>
<div class="t" style="top:689.05px;left:455.4px;letter-spacing:-0.67px;">Lyy = 866978.05</div>
<div class="t" style="top:689.05px;left:595.2px;letter-spacing:-0.63px;">Lyz = 721.08</div>
<div class="t" style="top:702.05px;left:315.0px;letter-spacing:-0.63px;">Lzx = -39.33</div>
<div class="t" style="top:702.05px;left:455.4px;letter-spacing:-0.70px;">Lzy = 721.08</div>
<div class="t" style="top:702.05px;left:595.2px;letter-spacing:-0.68px;">Lzz = 966810.74</div>
<div class="t" style="top:728.05px;left:295.0px;letter-spacing:-0.23px;">Moments of inertia: ( grams *  square millimeters )</div>
<div class="t" style="top:741.05px;left:295.0px;letter-spacing:-0.11px;">Taken at the output coordinate system. (Using positive tensor notation.)</div>
<div class="t" style="top:754.05px;left:315.0px;letter-spacing:-0.56px;">Ixx = 3037814.72</div>
<div class="t" style="top:754.05px;left:455.4px;letter-spacing:-0.54px;">Ixy = 7.60</div>
<div class="t" style="top:754.05px;left:595.2px;letter-spacing:-0.49px;">Ixz = -39.34</div>
<div class="t" style="top:767.05px;left:315.0px;letter-spacing:-0.51px;">Iyx = 7.60</div>
<div class="t" style="top:767.05px;left:455.4px;letter-spacing:-0.59px;">Iyy = 866980.92</div>
<div class="t" style="top:767.05px;left:595.2px;letter-spacing:-0.55px;">Iyz = -1677.05</div>
<div class="t" style="top:780.05px;left:315.0px;letter-spacing:-0.49px;">Izx = -39.34</div>
<div class="t" style="top:780.05px;left:455.4px;letter-spacing:-0.58px;">Izy = -1677.05</div>
<div class="t" style="top:780.05px;left:595.2px;letter-spacing:-0.60px;">Izz = 2970579.49</div>
<div class="a" style="left:294px;top:822px;width:393px;height:17px;background:#f0f0f0;"></div>
<div class="a" style="left:311px;top:822px;width:249px;height:17px;background:#cdcdcd;"></div>
<svg class="a" style="left:298px;top:826px;" width="8" height="9" viewBox="0 0 8 9"><path d="M6 1L2 4.500L6 8" fill="none" stroke="#505050" stroke-width="1.500"/></svg>
<svg class="a" style="left:674px;top:826px;" width="8" height="9" viewBox="0 0 8 9"><path d="M2 1L6 4.500L2 8" fill="none" stroke="#505050" stroke-width="1.500"/></svg>
<div class="a" style="left:293px;top:849px;width:88px;height:21px;background:#e1e1e1;border:1px solid #adadad;"></div>
<div class="t" style="top:850.15px;left:325.0px;letter-spacing:-0.36px;">Help</div>
<div class="a" style="left:441px;top:849px;width:91px;height:21px;background:#e1e1e1;border:1px solid #adadad;"></div>
<div class="t" style="top:850.15px;left:469.8px;letter-spacing:-0.22px;"><u>P</u>rint...</div>
<div class="a" style="left:581px;top:849px;width:121px;height:21px;background:#e1e1e1;border:1px solid #adadad;"></div>
<div class="t" style="top:850.15px;left:594.2px;letter-spacing:-0.16px;"><u>C</u>opy to Clipboard</div>
<!-- 09_bottom_right.py -->
<div class="a" style="left:0px;top:1046px;width:1920px;height:16px;background:#f7f7f7;border-top:1px solid #8c8c8c;border-bottom:1px solid #8c8c8c;"></div>
<div class="a" style="left:2px;top:1047px;width:65px;height:14px;background:#a6a6a6;"></div>
<div class="a" style="left:3px;top:1047px;width:15px;height:14px;background:#adadad;border-right:1px solid #9a9a9a;"></div>
<div class="a" style="left:19px;top:1047px;width:15px;height:14px;background:#adadad;border-right:1px solid #9a9a9a;"></div>
<div class="a" style="left:35px;top:1047px;width:15px;height:14px;background:#adadad;border-right:1px solid #9a9a9a;"></div>
<div class="a" style="left:51px;top:1047px;width:15px;height:14px;background:#adadad;border-right:1px solid #9a9a9a;"></div>
<svg class="a" style="left:3px;top:1046px;" width="64" height="15" viewBox="0 0 64 15"><g fill="#8e8e8e"><path d="M9.500 4L5.500 7.500L9.500 11z"/><rect x="4" y="4" width="1.500" height="7"/><path d="M26.500 4L22.500 7.500L26.500 11z"/><path d="M38 4L42 7.500L38 11z"/><path d="M54 4L58 7.500L54 11z"/><rect x="58" y="4" width="1.500" height="7"/></g></svg>
<div class="a" style="left:67px;top:1046px;width:56px;height:16px;background:#f7f7f7;"></div>
<div class="t" style="top:1043.15px;left:79.5px;font-size:13px;font-weight:bold;letter-spacing:-0.76px;">Model</div>
<div class="a" style="left:123px;top:1046px;width:177px;height:16px;background:#d2d2d2;border:1px solid #8c8c8c;border-top:none;"></div>
<div class="a" style="left:191px;top:1046px;width:1px;height:15px;background:#8c8c8c;"></div>
<div class="t" style="top:1043.15px;left:134.0px;letter-spacing:-0.50px;">3D Views</div>
<div class="t" style="top:1043.15px;left:201.0px;letter-spacing:0.04px;">Motion Study 1</div>
<div class="a" style="left:1917px;top:1046px;width:1px;height:15px;background:#c4c4c4;"></div>
<div class="a" style="left:0px;top:1062px;width:1920px;height:18px;background:#e6e6e6;"></div>
<div class="t" style="top:1061.65px;left:1.3px;letter-spacing:-1.07px;">SOLIDWORKS</div>
<div class="t" style="top:1061.65px;left:1811.7px;letter-spacing:-0.11px;">Custom</div>
<svg class="a" style="left:1868px;top:1069.5px;" width="7" height="4" viewBox="0 0 7 4"><path d="M0 4L3.500 0L7 4z" fill="#444"/></svg>
<svg class="a" style="left:1900px;top:1063px;" width="18" height="16" viewBox="0 0 18 16"><path d="M1.600 6.600L8.600 1.400L16.800 6.600V10.400L9.400 15.400L1.600 10.400z" fill="#f2f2f2" stroke="#333" stroke-width="1.100"/><path d="M1.600 6.600L9.400 11.400L16.800 6.600M9.400 11.400V15.400" fill="none" stroke="#333" stroke-width="1"/><ellipse cx="9.200" cy="6" rx="2.600" ry="1.700" fill="none" stroke="#333" stroke-width="1"/></svg>
<div class="t" style="top:1026.15px;left:253.7px;font-size:13px;font-weight:bold;letter-spacing:0.19px;">*Isometric</div>
<svg class="a" style="left:250px;top:948px;" width="70" height="62" viewBox="0 0 70 62"><g stroke-linecap="round"><path d="M33.300 40.300V21" stroke="#1f7a2a" stroke-width="3.200"/><path d="M33.300 38V22" stroke="#7ad07a" stroke-width="1"/><path d="M33.300 40.300L17 48.500" stroke="#1414c8" stroke-width="3.400"/><path d="M33.300 40.300L49.500 48.500" stroke="#c01818" stroke-width="3.400"/></g><path d="M33.300 15.500L37.600 23.500H29z" fill="#1a6a24"/><path d="M12.500 50.800L17.800 43.800L21.400 50.600z" fill="#1414c8"/><path d="M54 50.800L45.200 50.800L48.800 43.800z" fill="#c01818"/><circle cx="33.300" cy="22" r="3.400" fill="#1f7a2a"/></svg>
<div class="t" style="left:280px;top:951px;font-size:8px;font-weight:bold;color:#1f8a2a;line-height:10px;height:10px;">Y</div>
<div class="t" style="left:256px;top:995px;font-size:8px;font-weight:bold;color:#2a2ae0;line-height:10px;height:10px;">Z</div>
<div class="t" style="left:306px;top:995px;font-size:8px;font-weight:bold;color:#f0505a;line-height:10px;height:10px;">X</div>
<div class="a" style="left:1894px;top:168px;width:26px;height:217px;background:#d6d6d6;border:1px solid #8c8c8c;border-right:none;"></div>
<div class="a" style="left:1895px;top:191px;width:25px;height:1px;background:#8c8c8c;"></div>
<div class="a" style="left:1895px;top:215px;width:25px;height:1px;background:#8c8c8c;"></div>
<div class="a" style="left:1895px;top:239px;width:25px;height:1px;background:#8c8c8c;"></div>
<div class="a" style="left:1895px;top:263px;width:25px;height:1px;background:#8c8c8c;"></div>
<div class="a" style="left:1895px;top:287px;width:25px;height:1px;background:#8c8c8c;"></div>
<div class="a" style="left:1895px;top:311px;width:25px;height:1px;background:#8c8c8c;"></div>
<div class="a" style="left:1895px;top:335px;width:25px;height:1px;background:#8c8c8c;"></div>
<div class="a" style="left:1895px;top:359px;width:25px;height:1px;background:#8c8c8c;"></div>
<div class="a" style="left:1895px;top:264px;width:25px;height:23px;background:#f7f7f7;"></div>
<svg class="a" style="left:1897px;top:170px;" width="20" height="20" viewBox="0 0 20 20"><path d="M1.600 9.400L10 2L18.400 9.400" fill="none" stroke="#2e6a96" stroke-width="2.300"/><path d="M4.200 9.400V17.600H15.800V9.400L10 4.400z" fill="#fff" stroke="#222" stroke-width="1.200"/><path d="M8.200 17.400V11.400H11.800V17.400" fill="#fff" stroke="#222" stroke-width="1.100"/></svg>
<svg class="a" style="left:1897px;top:194px;" width="20" height="20" viewBox="0 0 20 20"><g fill="#fbfbfb" stroke="#333" stroke-width="1.100" stroke-linejoin="round"><path d="M2.800 7L6.200 5L7.600 5.800V16.800L4.200 18.800L2.800 18z"/><path d="M4.200 7.800V18.800M4.200 7.800L7.600 5.800"/><path d="M7 5.400L10.400 3.400L11.800 4.200V15.200L8.400 17.200L7 16.400z"/><path d="M8.400 6.200V17.200M8.400 6.200L11.800 4.200"/><path d="M11.200 3.800L14.600 1.800L16 2.600V13.600L12.600 15.600L11.200 14.800z"/><path d="M12.600 4.600V15.600M12.600 4.600L16 2.600"/></g></svg>
<svg class="a" style="left:1897px;top:218px;" width="20" height="20" viewBox="0 0 20 20"><path d="M2 16.600V3.400H7.600L9 5.400H14.600V7.600" fill="#d8d8d8" stroke="#444" stroke-width="1.100"/><path d="M2 16.600L6 7.600H19L15 16.600z" fill="#f6f6f6" stroke="#444" stroke-width="1.100"/></svg>
<svg class="a" style="left:1897px;top:242px;" width="20" height="20" viewBox="0 0 20 20"><rect x="2.400" y="2.400" width="15.200" height="15.200" rx="1.500" fill="#fff" stroke="#333" stroke-width="1.200"/><g fill="#f2c81e" stroke="#7a5a08" stroke-width=".7"><rect x="4.400" y="4.600" width="6.600" height="2.400"/><rect x="12.600" y="4.600" width="3" height="2.400"/><path d="M6.800 9.400H9.600V12.400H12.400V15H4.400V12.400H6.800z"/></g><rect x="13.600" y="10" width="3" height="6" fill="#bbb" stroke="#555" stroke-width=".7"/></svg>
<svg class="a" style="left:1897px;top:266px;" width="20" height="20" viewBox="0 0 20 20"><defs><clipPath id="bc4"><circle cx="10" cy="10" r="8.200"/></clipPath><radialGradient id="bsh2" cx=".35" cy=".3" r=".8"><stop offset="0" stop-color="#fff" stop-opacity=".45"/><stop offset=".6" stop-color="#fff" stop-opacity="0"/><stop offset="1" stop-color="#000" stop-opacity=".25"/></radialGradient></defs><g clip-path="url(#bc4)"><rect width="10.500" height="11" fill="#3a78e0"/><rect x="10.500" width="10" height="11" fill="#e02a20"/><rect y="11" width="10.500" height="10" fill="#2aa83a"/><rect x="10.500" y="11" width="10" height="10" fill="#f2c81e"/><rect width="20" height="20" fill="url(#bsh2)"/></g></svg>
<svg class="a" style="left:1897px;top:290px;" width="20" height="20" viewBox="0 0 20 20"><rect x="2" y="2" width="16" height="16" rx="1" fill="#fff" stroke="#1d4c70" stroke-width="1.200"/><rect x="2" y="2" width="16" height="3" fill="#4a9ad0"/><g fill="#3f9bd4" stroke="#1d4c70" stroke-width=".6"><rect x="4" y="7" width="3.600" height="2"/><rect x="4" y="10.600" width="3.600" height="2"/><rect x="4" y="14.200" width="3.600" height="2"/></g><path d="M9.400 8H16M9.400 11.600H16M9.400 15.200H16" stroke="#222" stroke-width="1"/></svg>
<svg class="a" style="left:1897px;top:314px;" width="20" height="20" viewBox="0 0 20 20"><rect x="1.600" y="2" width="14" height="10.400" fill="#fff" stroke="#222" stroke-width="1.200"/><path d="M4 5H13M4 7.600H9" stroke="#3f8cc4" stroke-width="1.400"/><path d="M8.600 12.400V15M4.600 15.600H10" stroke="#222" stroke-width="1.300"/><path d="M8 11L11.400 8.600L14 9.600V8L16.600 7L19 8.400V15L13 18.400L8 14.600z" fill="#f2c81e" stroke="#7a5a08" stroke-width=".9"/><path d="M13.600 8.600L16.400 7.600L18.200 8.800V11.600L15.800 12.400L13.600 11.400z" fill="#4a9ad0" stroke="#1d4c70" stroke-width=".6"/></svg>
<svg class="a" style="left:1897px;top:338px;" width="20" height="20" viewBox="0 0 20 20"><g fill="#f4f4f4" stroke="#333" stroke-width="1.100"><path d="M2.400 4.400V15.600C2.400 18.400 12.400 18.400 12.400 15.600V4.400"/><ellipse cx="7.400" cy="4.400" rx="5" ry="2.400"/><path d="M2.400 8.200C2.400 10.800 12.400 10.800 12.400 8.200M2.400 12C2.400 14.600 12.400 14.600 12.400 12" fill="none"/></g><path d="M19 7.600H13M15 5L12.400 7.600L15 10.200" fill="none" stroke="#2e6a96" stroke-width="2.200"/><path d="M11.600 13.600H17.600M15.600 11L18.200 13.600L15.600 16.200" fill="none" stroke="#2e6a96" stroke-width="2.200"/></svg>
<svg class="a" style="left:1897px;top:362px;" width="20" height="20" viewBox="0 0 20 20"><path d="M2 6L10 2.400L18 6V15L10 18.600L2 15z" fill="#d81e28" stroke="#8a1018" stroke-width=".8"/><path d="M2 6L10 9.600L18 6M10 9.600V18.600" fill="none" stroke="#f4a0a0" stroke-width=".7"/><circle cx="6.600" cy="11" r="3.600" fill="#fff"/><rect x="11.600" y="7.400" width="3" height="8" fill="#f4f4f4" transform="skewY(-20) translate(0 5)"/><path d="M12.400 13.600L17.600 18.600" stroke="#3f8cc4" stroke-width="2.200"/></svg>
<div class="t" style="top:363.15px;left:1901.6px;font-size:8px;color:#d81e28;font-weight:bold;letter-spacing:0.00px;">S</div>
<div class="a" style="left:1919px;top:35px;width:1px;height:105px;background:#5e5e5e;"></div>
</body></html>
